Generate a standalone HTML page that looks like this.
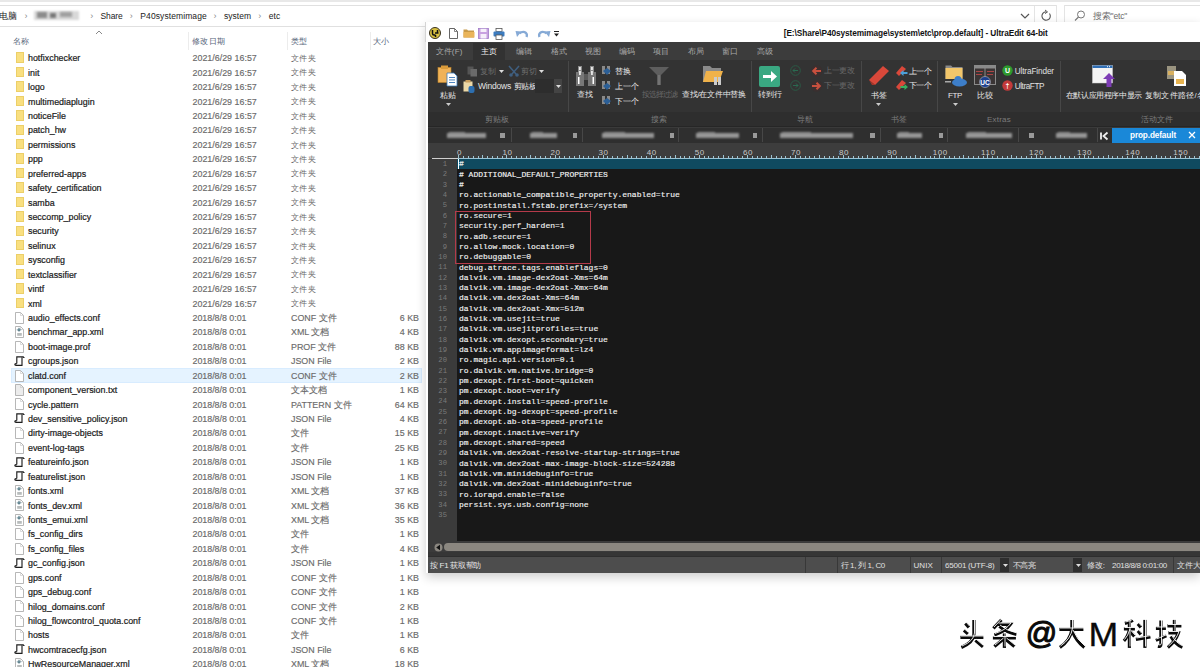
<!DOCTYPE html><html><head><meta charset="utf-8"><style>
*{margin:0;padding:0;box-sizing:border-box}
html,body{width:1200px;height:667px;overflow:hidden;background:#fff}
body{position:relative;font-family:"Liberation Sans",sans-serif;font-size:9px;color:#222}
.a{position:absolute;white-space:nowrap}
.r{position:absolute}
svg{position:absolute;overflow:visible}
</style></head><body>
<div class="r" style="left:0px;top:0px;width:1200px;height:2px;background:#e8e8e8;"></div>
<div class="r" style="left:0px;top:5px;width:1034px;height:1px;background:#e0e0e0;"></div>
<div class="r" style="left:0px;top:26px;width:1034px;height:1px;background:#e0e0e0;"></div>
<div class="r" style="left:1034px;top:5px;width:1px;height:22px;background:#e4e4e4;"></div>
<div class="r" style="left:1056px;top:5px;width:1px;height:22px;background:#e4e4e4;"></div>
<div class="r" style="left:1034px;top:5px;width:22px;height:1px;background:#e0e0e0;"></div>
<div class="r" style="left:1034px;top:26px;width:22px;height:1px;background:#e0e0e0;"></div>
<div class="r" style="left:1064px;top:5px;width:136px;height:1px;background:#e0e0e0;"></div>
<div class="r" style="left:1064px;top:26px;width:136px;height:1px;background:#e0e0e0;"></div>
<div class="r" style="left:1064px;top:5px;width:1px;height:22px;background:#e4e4e4;"></div>
<div class="a" style="left:-1.00px;top:10.60px;line-height:11.05px;font-size:8.5px;font-weight:normal;font-family:'Liberation Sans',sans-serif;color:#222;">电脑</div>
<div class="r" style="left:34px;top:11px;width:45px;height:9px;background:#d8d8d8;filter:blur(0.8px)"></div>
<div class="r" style="left:37px;top:12px;width:10px;height:6px;background:#8c8c8c;filter:blur(0.8px)"></div>
<div class="r" style="left:50px;top:13px;width:6px;height:5px;background:#777;filter:blur(0.8px)"></div>
<div class="r" style="left:60px;top:12px;width:12px;height:5px;background:#a0a0a0;filter:blur(0.8px)"></div>
<div class="a" style="left:24.50px;top:10.78px;line-height:11.7px;font-size:9px;font-weight:normal;font-family:'Liberation Sans',sans-serif;color:#8a8a8a;">›</div>
<div class="a" style="left:90.20px;top:10.78px;line-height:11.7px;font-size:9px;font-weight:normal;font-family:'Liberation Sans',sans-serif;color:#8a8a8a;">›</div>
<div class="a" style="left:129.80px;top:10.78px;line-height:11.7px;font-size:9px;font-weight:normal;font-family:'Liberation Sans',sans-serif;color:#8a8a8a;">›</div>
<div class="a" style="left:213.50px;top:10.78px;line-height:11.7px;font-size:9px;font-weight:normal;font-family:'Liberation Sans',sans-serif;color:#8a8a8a;">›</div>
<div class="a" style="left:258.20px;top:10.78px;line-height:11.7px;font-size:9px;font-weight:normal;font-family:'Liberation Sans',sans-serif;color:#8a8a8a;">›</div>
<div class="a" style="left:100.40px;top:10.60px;line-height:11.05px;font-size:8.5px;font-weight:normal;font-family:'Liberation Sans',sans-serif;letter-spacing:-0.077px;color:#222;">Share</div>
<div class="a" style="left:140.30px;top:10.60px;line-height:11.05px;font-size:8.5px;font-weight:normal;font-family:'Liberation Sans',sans-serif;letter-spacing:0.093px;color:#222;">P40systemimage</div>
<div class="a" style="left:224.00px;top:10.60px;line-height:11.05px;font-size:8.5px;font-weight:normal;font-family:'Liberation Sans',sans-serif;letter-spacing:0.013px;color:#222;">system</div>
<div class="a" style="left:268.70px;top:10.60px;line-height:11.05px;font-size:8.5px;font-weight:normal;font-family:'Liberation Sans',sans-serif;letter-spacing:0.052px;color:#222;">etc</div>
<svg style="left:1020px;top:13px" width="10" height="6"><path d="M1 1 L5 5 L9 1" fill="none" stroke="#555" stroke-width="1.2"/></svg>
<svg style="left:1040px;top:10px" width="12" height="12"><path d="M9.5 3.5 A4.2 4.2 0 1 1 6 1.8" fill="none" stroke="#555" stroke-width="1.1"/><path d="M5 0 L7.5 1.9 L5 3.6" fill="none" stroke="#555" stroke-width="1"/></svg>
<svg style="left:1074px;top:10px" width="12" height="12"><circle cx="7" cy="4.5" r="3.5" fill="none" stroke="#777" stroke-width="1"/><path d="M4.5 7 L1 10.5" stroke="#777" stroke-width="1.1"/></svg>
<div class="a" style="left:1093.00px;top:11.10px;line-height:11.05px;font-size:8.5px;font-weight:normal;font-family:'Liberation Sans',sans-serif;letter-spacing:-0.196px;color:#6d6d6d;">搜索"etc"</div>
<div class="a" style="left:13.00px;top:35.53px;line-height:10.79px;font-size:8.3px;font-weight:normal;font-family:'Liberation Sans',sans-serif;letter-spacing:0.250px;color:#56657a;">名称</div>
<div class="a" style="left:192.00px;top:35.53px;line-height:10.79px;font-size:8.3px;font-weight:normal;font-family:'Liberation Sans',sans-serif;letter-spacing:0.250px;color:#56657a;">修改日期</div>
<div class="a" style="left:291.00px;top:35.53px;line-height:10.79px;font-size:8.3px;font-weight:normal;font-family:'Liberation Sans',sans-serif;letter-spacing:0.250px;color:#56657a;">类型</div>
<div class="a" style="left:373.00px;top:35.53px;line-height:10.79px;font-size:8.3px;font-weight:normal;font-family:'Liberation Sans',sans-serif;letter-spacing:0.250px;color:#56657a;">大小</div>
<svg style="left:95px;top:30px" width="8" height="5"><path d="M1 4 L4 1 L7 4" fill="none" stroke="#888" stroke-width="1"/></svg>
<div class="r" style="left:188px;top:32px;width:1px;height:18px;background:#ececec;"></div>
<div class="r" style="left:287px;top:32px;width:1px;height:18px;background:#ececec;"></div>
<div class="r" style="left:370px;top:32px;width:1px;height:18px;background:#ececec;"></div>
<div class="r" style="left:15.5px;top:52.4px;width:8.5px;height:10.5px;background:#f9df80;border:0.6px solid #eccf68"></div>
<div class="a" style="left:28.00px;top:53.24px;line-height:11.57px;font-size:8.9px;font-weight:normal;font-family:'Liberation Sans',sans-serif;color:#1a1a1a;-webkit-text-stroke:0.2px #1a1a1a">hotfixchecker</div>
<div class="a" style="left:192.50px;top:53.24px;line-height:11.57px;font-size:8.9px;font-weight:normal;font-family:'Liberation Sans',sans-serif;letter-spacing:0.009px;color:#6a6a6a;-webkit-text-stroke:0.15px #6a6a6a">2021/6/29 16:57</div>
<div class="a" style="left:291.00px;top:53.99px;line-height:10.66px;font-size:8.2px;font-weight:normal;font-family:'Liberation Sans',sans-serif;letter-spacing:0.333px;color:#6a6a6a;">文件夹</div>
<div class="r" style="left:15.5px;top:66.83px;width:8.5px;height:10.5px;background:#f9df80;border:0.6px solid #eccf68"></div>
<div class="a" style="left:28.00px;top:67.67px;line-height:11.57px;font-size:8.9px;font-weight:normal;font-family:'Liberation Sans',sans-serif;color:#1a1a1a;-webkit-text-stroke:0.2px #1a1a1a">init</div>
<div class="a" style="left:192.50px;top:67.67px;line-height:11.57px;font-size:8.9px;font-weight:normal;font-family:'Liberation Sans',sans-serif;letter-spacing:0.009px;color:#6a6a6a;-webkit-text-stroke:0.15px #6a6a6a">2021/6/29 16:57</div>
<div class="a" style="left:291.00px;top:68.42px;line-height:10.66px;font-size:8.2px;font-weight:normal;font-family:'Liberation Sans',sans-serif;letter-spacing:0.333px;color:#6a6a6a;">文件夹</div>
<div class="r" style="left:15.5px;top:81.26px;width:8.5px;height:10.5px;background:#f9df80;border:0.6px solid #eccf68"></div>
<div class="a" style="left:28.00px;top:82.10px;line-height:11.57px;font-size:8.9px;font-weight:normal;font-family:'Liberation Sans',sans-serif;color:#1a1a1a;-webkit-text-stroke:0.2px #1a1a1a">logo</div>
<div class="a" style="left:192.50px;top:82.10px;line-height:11.57px;font-size:8.9px;font-weight:normal;font-family:'Liberation Sans',sans-serif;letter-spacing:0.009px;color:#6a6a6a;-webkit-text-stroke:0.15px #6a6a6a">2021/6/29 16:57</div>
<div class="a" style="left:291.00px;top:82.85px;line-height:10.66px;font-size:8.2px;font-weight:normal;font-family:'Liberation Sans',sans-serif;letter-spacing:0.333px;color:#6a6a6a;">文件夹</div>
<div class="r" style="left:15.5px;top:95.69px;width:8.5px;height:10.5px;background:#f9df80;border:0.6px solid #eccf68"></div>
<div class="a" style="left:28.00px;top:96.53px;line-height:11.57px;font-size:8.9px;font-weight:normal;font-family:'Liberation Sans',sans-serif;color:#1a1a1a;-webkit-text-stroke:0.2px #1a1a1a">multimediaplugin</div>
<div class="a" style="left:192.50px;top:96.53px;line-height:11.57px;font-size:8.9px;font-weight:normal;font-family:'Liberation Sans',sans-serif;letter-spacing:0.009px;color:#6a6a6a;-webkit-text-stroke:0.15px #6a6a6a">2021/6/29 16:57</div>
<div class="a" style="left:291.00px;top:97.28px;line-height:10.66px;font-size:8.2px;font-weight:normal;font-family:'Liberation Sans',sans-serif;letter-spacing:0.333px;color:#6a6a6a;">文件夹</div>
<div class="r" style="left:15.5px;top:110.12px;width:8.5px;height:10.5px;background:#f9df80;border:0.6px solid #eccf68"></div>
<div class="a" style="left:28.00px;top:110.96px;line-height:11.57px;font-size:8.9px;font-weight:normal;font-family:'Liberation Sans',sans-serif;color:#1a1a1a;-webkit-text-stroke:0.2px #1a1a1a">noticeFile</div>
<div class="a" style="left:192.50px;top:110.96px;line-height:11.57px;font-size:8.9px;font-weight:normal;font-family:'Liberation Sans',sans-serif;letter-spacing:0.009px;color:#6a6a6a;-webkit-text-stroke:0.15px #6a6a6a">2021/6/29 16:57</div>
<div class="a" style="left:291.00px;top:111.71px;line-height:10.66px;font-size:8.2px;font-weight:normal;font-family:'Liberation Sans',sans-serif;letter-spacing:0.333px;color:#6a6a6a;">文件夹</div>
<div class="r" style="left:15.5px;top:124.55px;width:8.5px;height:10.5px;background:#f9df80;border:0.6px solid #eccf68"></div>
<div class="a" style="left:28.00px;top:125.39px;line-height:11.57px;font-size:8.9px;font-weight:normal;font-family:'Liberation Sans',sans-serif;color:#1a1a1a;-webkit-text-stroke:0.2px #1a1a1a">patch_hw</div>
<div class="a" style="left:192.50px;top:125.39px;line-height:11.57px;font-size:8.9px;font-weight:normal;font-family:'Liberation Sans',sans-serif;letter-spacing:0.009px;color:#6a6a6a;-webkit-text-stroke:0.15px #6a6a6a">2021/6/29 16:57</div>
<div class="a" style="left:291.00px;top:126.14px;line-height:10.66px;font-size:8.2px;font-weight:normal;font-family:'Liberation Sans',sans-serif;letter-spacing:0.333px;color:#6a6a6a;">文件夹</div>
<div class="r" style="left:15.5px;top:138.98px;width:8.5px;height:10.5px;background:#f9df80;border:0.6px solid #eccf68"></div>
<div class="a" style="left:28.00px;top:139.82px;line-height:11.57px;font-size:8.9px;font-weight:normal;font-family:'Liberation Sans',sans-serif;color:#1a1a1a;-webkit-text-stroke:0.2px #1a1a1a">permissions</div>
<div class="a" style="left:192.50px;top:139.82px;line-height:11.57px;font-size:8.9px;font-weight:normal;font-family:'Liberation Sans',sans-serif;letter-spacing:0.009px;color:#6a6a6a;-webkit-text-stroke:0.15px #6a6a6a">2021/6/29 16:57</div>
<div class="a" style="left:291.00px;top:140.57px;line-height:10.66px;font-size:8.2px;font-weight:normal;font-family:'Liberation Sans',sans-serif;letter-spacing:0.333px;color:#6a6a6a;">文件夹</div>
<div class="r" style="left:15.5px;top:153.41px;width:8.5px;height:10.5px;background:#f9df80;border:0.6px solid #eccf68"></div>
<div class="a" style="left:28.00px;top:154.25px;line-height:11.57px;font-size:8.9px;font-weight:normal;font-family:'Liberation Sans',sans-serif;color:#1a1a1a;-webkit-text-stroke:0.2px #1a1a1a">ppp</div>
<div class="a" style="left:192.50px;top:154.25px;line-height:11.57px;font-size:8.9px;font-weight:normal;font-family:'Liberation Sans',sans-serif;letter-spacing:0.009px;color:#6a6a6a;-webkit-text-stroke:0.15px #6a6a6a">2021/6/29 16:57</div>
<div class="a" style="left:291.00px;top:155.00px;line-height:10.66px;font-size:8.2px;font-weight:normal;font-family:'Liberation Sans',sans-serif;letter-spacing:0.333px;color:#6a6a6a;">文件夹</div>
<div class="r" style="left:15.5px;top:167.84px;width:8.5px;height:10.5px;background:#f9df80;border:0.6px solid #eccf68"></div>
<div class="a" style="left:28.00px;top:168.68px;line-height:11.57px;font-size:8.9px;font-weight:normal;font-family:'Liberation Sans',sans-serif;color:#1a1a1a;-webkit-text-stroke:0.2px #1a1a1a">preferred-apps</div>
<div class="a" style="left:192.50px;top:168.68px;line-height:11.57px;font-size:8.9px;font-weight:normal;font-family:'Liberation Sans',sans-serif;letter-spacing:0.009px;color:#6a6a6a;-webkit-text-stroke:0.15px #6a6a6a">2021/6/29 16:57</div>
<div class="a" style="left:291.00px;top:169.43px;line-height:10.66px;font-size:8.2px;font-weight:normal;font-family:'Liberation Sans',sans-serif;letter-spacing:0.333px;color:#6a6a6a;">文件夹</div>
<div class="r" style="left:15.5px;top:182.27px;width:8.5px;height:10.5px;background:#f9df80;border:0.6px solid #eccf68"></div>
<div class="a" style="left:28.00px;top:183.11px;line-height:11.57px;font-size:8.9px;font-weight:normal;font-family:'Liberation Sans',sans-serif;color:#1a1a1a;-webkit-text-stroke:0.2px #1a1a1a">safety_certification</div>
<div class="a" style="left:192.50px;top:183.11px;line-height:11.57px;font-size:8.9px;font-weight:normal;font-family:'Liberation Sans',sans-serif;letter-spacing:0.009px;color:#6a6a6a;-webkit-text-stroke:0.15px #6a6a6a">2021/6/29 16:57</div>
<div class="a" style="left:291.00px;top:183.86px;line-height:10.66px;font-size:8.2px;font-weight:normal;font-family:'Liberation Sans',sans-serif;letter-spacing:0.333px;color:#6a6a6a;">文件夹</div>
<div class="r" style="left:15.5px;top:196.7px;width:8.5px;height:10.5px;background:#f9df80;border:0.6px solid #eccf68"></div>
<div class="a" style="left:28.00px;top:197.54px;line-height:11.57px;font-size:8.9px;font-weight:normal;font-family:'Liberation Sans',sans-serif;color:#1a1a1a;-webkit-text-stroke:0.2px #1a1a1a">samba</div>
<div class="a" style="left:192.50px;top:197.54px;line-height:11.57px;font-size:8.9px;font-weight:normal;font-family:'Liberation Sans',sans-serif;letter-spacing:0.009px;color:#6a6a6a;-webkit-text-stroke:0.15px #6a6a6a">2021/6/29 16:57</div>
<div class="a" style="left:291.00px;top:198.29px;line-height:10.66px;font-size:8.2px;font-weight:normal;font-family:'Liberation Sans',sans-serif;letter-spacing:0.333px;color:#6a6a6a;">文件夹</div>
<div class="r" style="left:15.5px;top:211.13px;width:8.5px;height:10.5px;background:#f9df80;border:0.6px solid #eccf68"></div>
<div class="a" style="left:28.00px;top:211.97px;line-height:11.57px;font-size:8.9px;font-weight:normal;font-family:'Liberation Sans',sans-serif;color:#1a1a1a;-webkit-text-stroke:0.2px #1a1a1a">seccomp_policy</div>
<div class="a" style="left:192.50px;top:211.97px;line-height:11.57px;font-size:8.9px;font-weight:normal;font-family:'Liberation Sans',sans-serif;letter-spacing:0.009px;color:#6a6a6a;-webkit-text-stroke:0.15px #6a6a6a">2021/6/29 16:57</div>
<div class="a" style="left:291.00px;top:212.72px;line-height:10.66px;font-size:8.2px;font-weight:normal;font-family:'Liberation Sans',sans-serif;letter-spacing:0.333px;color:#6a6a6a;">文件夹</div>
<div class="r" style="left:15.5px;top:225.56px;width:8.5px;height:10.5px;background:#f9df80;border:0.6px solid #eccf68"></div>
<div class="a" style="left:28.00px;top:226.40px;line-height:11.57px;font-size:8.9px;font-weight:normal;font-family:'Liberation Sans',sans-serif;color:#1a1a1a;-webkit-text-stroke:0.2px #1a1a1a">security</div>
<div class="a" style="left:192.50px;top:226.40px;line-height:11.57px;font-size:8.9px;font-weight:normal;font-family:'Liberation Sans',sans-serif;letter-spacing:0.009px;color:#6a6a6a;-webkit-text-stroke:0.15px #6a6a6a">2021/6/29 16:57</div>
<div class="a" style="left:291.00px;top:227.15px;line-height:10.66px;font-size:8.2px;font-weight:normal;font-family:'Liberation Sans',sans-serif;letter-spacing:0.333px;color:#6a6a6a;">文件夹</div>
<div class="r" style="left:15.5px;top:239.99px;width:8.5px;height:10.5px;background:#f9df80;border:0.6px solid #eccf68"></div>
<div class="a" style="left:28.00px;top:240.83px;line-height:11.57px;font-size:8.9px;font-weight:normal;font-family:'Liberation Sans',sans-serif;color:#1a1a1a;-webkit-text-stroke:0.2px #1a1a1a">selinux</div>
<div class="a" style="left:192.50px;top:240.83px;line-height:11.57px;font-size:8.9px;font-weight:normal;font-family:'Liberation Sans',sans-serif;letter-spacing:0.009px;color:#6a6a6a;-webkit-text-stroke:0.15px #6a6a6a">2021/6/29 16:57</div>
<div class="a" style="left:291.00px;top:241.58px;line-height:10.66px;font-size:8.2px;font-weight:normal;font-family:'Liberation Sans',sans-serif;letter-spacing:0.333px;color:#6a6a6a;">文件夹</div>
<div class="r" style="left:15.5px;top:254.42px;width:8.5px;height:10.5px;background:#f9df80;border:0.6px solid #eccf68"></div>
<div class="a" style="left:28.00px;top:255.26px;line-height:11.57px;font-size:8.9px;font-weight:normal;font-family:'Liberation Sans',sans-serif;color:#1a1a1a;-webkit-text-stroke:0.2px #1a1a1a">sysconfig</div>
<div class="a" style="left:192.50px;top:255.26px;line-height:11.57px;font-size:8.9px;font-weight:normal;font-family:'Liberation Sans',sans-serif;letter-spacing:0.009px;color:#6a6a6a;-webkit-text-stroke:0.15px #6a6a6a">2021/6/29 16:57</div>
<div class="a" style="left:291.00px;top:256.01px;line-height:10.66px;font-size:8.2px;font-weight:normal;font-family:'Liberation Sans',sans-serif;letter-spacing:0.333px;color:#6a6a6a;">文件夹</div>
<div class="r" style="left:15.5px;top:268.85px;width:8.5px;height:10.5px;background:#f9df80;border:0.6px solid #eccf68"></div>
<div class="a" style="left:28.00px;top:269.69px;line-height:11.57px;font-size:8.9px;font-weight:normal;font-family:'Liberation Sans',sans-serif;color:#1a1a1a;-webkit-text-stroke:0.2px #1a1a1a">textclassifier</div>
<div class="a" style="left:192.50px;top:269.69px;line-height:11.57px;font-size:8.9px;font-weight:normal;font-family:'Liberation Sans',sans-serif;letter-spacing:0.009px;color:#6a6a6a;-webkit-text-stroke:0.15px #6a6a6a">2021/6/29 16:57</div>
<div class="a" style="left:291.00px;top:270.44px;line-height:10.66px;font-size:8.2px;font-weight:normal;font-family:'Liberation Sans',sans-serif;letter-spacing:0.333px;color:#6a6a6a;">文件夹</div>
<div class="r" style="left:15.5px;top:283.28px;width:8.5px;height:10.5px;background:#f9df80;border:0.6px solid #eccf68"></div>
<div class="a" style="left:28.00px;top:284.12px;line-height:11.57px;font-size:8.9px;font-weight:normal;font-family:'Liberation Sans',sans-serif;color:#1a1a1a;-webkit-text-stroke:0.2px #1a1a1a">vintf</div>
<div class="a" style="left:192.50px;top:284.12px;line-height:11.57px;font-size:8.9px;font-weight:normal;font-family:'Liberation Sans',sans-serif;letter-spacing:0.009px;color:#6a6a6a;-webkit-text-stroke:0.15px #6a6a6a">2021/6/29 16:57</div>
<div class="a" style="left:291.00px;top:284.87px;line-height:10.66px;font-size:8.2px;font-weight:normal;font-family:'Liberation Sans',sans-serif;letter-spacing:0.333px;color:#6a6a6a;">文件夹</div>
<div class="r" style="left:15.5px;top:297.71px;width:8.5px;height:10.5px;background:#f9df80;border:0.6px solid #eccf68"></div>
<div class="a" style="left:28.00px;top:298.55px;line-height:11.57px;font-size:8.9px;font-weight:normal;font-family:'Liberation Sans',sans-serif;color:#1a1a1a;-webkit-text-stroke:0.2px #1a1a1a">xml</div>
<div class="a" style="left:192.50px;top:298.55px;line-height:11.57px;font-size:8.9px;font-weight:normal;font-family:'Liberation Sans',sans-serif;letter-spacing:0.009px;color:#6a6a6a;-webkit-text-stroke:0.15px #6a6a6a">2021/6/29 16:57</div>
<div class="a" style="left:291.00px;top:299.30px;line-height:10.66px;font-size:8.2px;font-weight:normal;font-family:'Liberation Sans',sans-serif;letter-spacing:0.333px;color:#6a6a6a;">文件夹</div>
<svg style="left:15px;top:311.84px" width="9" height="12"><path d="M0.5 0.5 H5.5 L8.5 3.5 V11.5 H0.5 Z" fill="#fff" stroke="#a4a4a4" stroke-width="0.8"/><path d="M5.5 0.5 V3.5 H8.5" fill="none" stroke="#c4c4c4" stroke-width="0.6"/></svg>
<div class="a" style="left:28.00px;top:312.98px;line-height:11.57px;font-size:8.9px;font-weight:normal;font-family:'Liberation Sans',sans-serif;color:#1a1a1a;-webkit-text-stroke:0.2px #1a1a1a">audio_effects.conf</div>
<div class="a" style="left:192.50px;top:312.98px;line-height:11.57px;font-size:8.9px;font-weight:normal;font-family:'Liberation Sans',sans-serif;letter-spacing:-0.023px;color:#6a6a6a;-webkit-text-stroke:0.15px #6a6a6a">2018/8/8 0:01</div>
<div class="a" style="left:291.00px;top:312.98px;line-height:11.57px;font-size:8.9px;font-weight:normal;font-family:'Liberation Sans',sans-serif;color:#6a6a6a;-webkit-text-stroke:0.15px #6a6a6a">CONF 文件</div>
<div class="a" style="left:399.75px;top:312.98px;line-height:11.57px;font-size:8.9px;font-weight:normal;font-family:'Liberation Sans',sans-serif;color:#6a6a6a;-webkit-text-stroke:0.15px #6a6a6a">6 KB</div>
<svg style="left:15px;top:326.27px" width="9" height="12"><path d="M0.5 0.5 H5.5 L8.5 3.5 V11.5 H0.5 Z" fill="#fff" stroke="#a4a4a4" stroke-width="0.8"/><path d="M5.5 0.5 V3.5 H8.5" fill="none" stroke="#c4c4c4" stroke-width="0.6"/><circle cx="4" cy="3.8" r="1.5" fill="#4a6a70"/><path d="M1.5 3.8 H6.5 M4 1.5 V6" stroke="#8ab" stroke-width="0.6"/><rect x="2.2" y="7" width="4.6" height="2.8" fill="#b8bcbc"/></svg>
<div class="a" style="left:28.00px;top:327.41px;line-height:11.57px;font-size:8.9px;font-weight:normal;font-family:'Liberation Sans',sans-serif;color:#1a1a1a;-webkit-text-stroke:0.2px #1a1a1a">benchmar_app.xml</div>
<div class="a" style="left:192.50px;top:327.41px;line-height:11.57px;font-size:8.9px;font-weight:normal;font-family:'Liberation Sans',sans-serif;letter-spacing:-0.023px;color:#6a6a6a;-webkit-text-stroke:0.15px #6a6a6a">2018/8/8 0:01</div>
<div class="a" style="left:291.00px;top:327.41px;line-height:11.57px;font-size:8.9px;font-weight:normal;font-family:'Liberation Sans',sans-serif;color:#6a6a6a;-webkit-text-stroke:0.15px #6a6a6a">XML 文档</div>
<div class="a" style="left:399.75px;top:327.41px;line-height:11.57px;font-size:8.9px;font-weight:normal;font-family:'Liberation Sans',sans-serif;color:#6a6a6a;-webkit-text-stroke:0.15px #6a6a6a">4 KB</div>
<svg style="left:15px;top:340.70px" width="9" height="12"><path d="M0.5 0.5 H5.5 L8.5 3.5 V11.5 H0.5 Z" fill="#fff" stroke="#a4a4a4" stroke-width="0.8"/><path d="M5.5 0.5 V3.5 H8.5" fill="none" stroke="#c4c4c4" stroke-width="0.6"/></svg>
<div class="a" style="left:28.00px;top:341.84px;line-height:11.57px;font-size:8.9px;font-weight:normal;font-family:'Liberation Sans',sans-serif;color:#1a1a1a;-webkit-text-stroke:0.2px #1a1a1a">boot-image.prof</div>
<div class="a" style="left:192.50px;top:341.84px;line-height:11.57px;font-size:8.9px;font-weight:normal;font-family:'Liberation Sans',sans-serif;letter-spacing:-0.023px;color:#6a6a6a;-webkit-text-stroke:0.15px #6a6a6a">2018/8/8 0:01</div>
<div class="a" style="left:291.00px;top:341.84px;line-height:11.57px;font-size:8.9px;font-weight:normal;font-family:'Liberation Sans',sans-serif;color:#6a6a6a;-webkit-text-stroke:0.15px #6a6a6a">PROF 文件</div>
<div class="a" style="left:394.81px;top:341.84px;line-height:11.57px;font-size:8.9px;font-weight:normal;font-family:'Liberation Sans',sans-serif;color:#6a6a6a;-webkit-text-stroke:0.15px #6a6a6a">88 KB</div>
<svg style="left:14px;top:355.63px" width="11" height="11"><path d="M2.8 7.6 V0.9 H9.8" fill="none" stroke="#1e1e1e" stroke-width="1.15"/><path d="M8 1.2 V9.3 H2 Q0.8 9.3 0.8 8.4 Q0.8 7.6 2.8 7.6" fill="none" stroke="#1e1e1e" stroke-width="1.15"/><path d="M9.8 0.9 L9.8 2" stroke="#1e1e1e" stroke-width="1.4"/></svg>
<div class="a" style="left:28.00px;top:356.27px;line-height:11.57px;font-size:8.9px;font-weight:normal;font-family:'Liberation Sans',sans-serif;color:#1a1a1a;-webkit-text-stroke:0.2px #1a1a1a">cgroups.json</div>
<div class="a" style="left:192.50px;top:356.27px;line-height:11.57px;font-size:8.9px;font-weight:normal;font-family:'Liberation Sans',sans-serif;letter-spacing:-0.023px;color:#6a6a6a;-webkit-text-stroke:0.15px #6a6a6a">2018/8/8 0:01</div>
<div class="a" style="left:291.00px;top:356.27px;line-height:11.57px;font-size:8.9px;font-weight:normal;font-family:'Liberation Sans',sans-serif;color:#6a6a6a;-webkit-text-stroke:0.15px #6a6a6a">JSON File</div>
<div class="a" style="left:399.75px;top:356.27px;line-height:11.57px;font-size:8.9px;font-weight:normal;font-family:'Liberation Sans',sans-serif;color:#6a6a6a;-webkit-text-stroke:0.15px #6a6a6a">2 KB</div>
<div class="r" style="left:11px;top:368.15999999999997px;width:411px;height:14.6px;background:#e5f3ff;border:1px solid #d8ecff"></div>
<svg style="left:15px;top:369.56px" width="9" height="12"><path d="M0.5 0.5 H5.5 L8.5 3.5 V11.5 H0.5 Z" fill="#fff" stroke="#a4a4a4" stroke-width="0.8"/><path d="M5.5 0.5 V3.5 H8.5" fill="none" stroke="#c4c4c4" stroke-width="0.6"/></svg>
<div class="a" style="left:28.00px;top:370.70px;line-height:11.57px;font-size:8.9px;font-weight:normal;font-family:'Liberation Sans',sans-serif;color:#1a1a1a;-webkit-text-stroke:0.2px #1a1a1a">clatd.conf</div>
<div class="a" style="left:192.50px;top:370.70px;line-height:11.57px;font-size:8.9px;font-weight:normal;font-family:'Liberation Sans',sans-serif;letter-spacing:-0.023px;color:#6a6a6a;-webkit-text-stroke:0.15px #6a6a6a">2018/8/8 0:01</div>
<div class="a" style="left:291.00px;top:370.70px;line-height:11.57px;font-size:8.9px;font-weight:normal;font-family:'Liberation Sans',sans-serif;color:#6a6a6a;-webkit-text-stroke:0.15px #6a6a6a">CONF 文件</div>
<div class="a" style="left:399.75px;top:370.70px;line-height:11.57px;font-size:8.9px;font-weight:normal;font-family:'Liberation Sans',sans-serif;color:#6a6a6a;-webkit-text-stroke:0.15px #6a6a6a">2 KB</div>
<svg style="left:15px;top:383.99px" width="9" height="12"><path d="M0.5 0.5 H5.5 L8.5 3.5 V11.5 H0.5 Z" fill="#ececec" stroke="#a4a4a4" stroke-width="0.8"/><path d="M5.5 0.5 V3.5 H8.5" fill="none" stroke="#c4c4c4" stroke-width="0.6"/></svg>
<div class="a" style="left:28.00px;top:385.13px;line-height:11.57px;font-size:8.9px;font-weight:normal;font-family:'Liberation Sans',sans-serif;color:#1a1a1a;-webkit-text-stroke:0.2px #1a1a1a">component_version.txt</div>
<div class="a" style="left:192.50px;top:385.13px;line-height:11.57px;font-size:8.9px;font-weight:normal;font-family:'Liberation Sans',sans-serif;letter-spacing:-0.023px;color:#6a6a6a;-webkit-text-stroke:0.15px #6a6a6a">2018/8/8 0:01</div>
<div class="a" style="left:291.00px;top:385.13px;line-height:11.57px;font-size:8.9px;font-weight:normal;font-family:'Liberation Sans',sans-serif;color:#6a6a6a;-webkit-text-stroke:0.15px #6a6a6a">文本文档</div>
<div class="a" style="left:399.75px;top:385.13px;line-height:11.57px;font-size:8.9px;font-weight:normal;font-family:'Liberation Sans',sans-serif;color:#6a6a6a;-webkit-text-stroke:0.15px #6a6a6a">1 KB</div>
<svg style="left:15px;top:398.42px" width="9" height="12"><path d="M0.5 0.5 H5.5 L8.5 3.5 V11.5 H0.5 Z" fill="#fff" stroke="#a4a4a4" stroke-width="0.8"/><path d="M5.5 0.5 V3.5 H8.5" fill="none" stroke="#c4c4c4" stroke-width="0.6"/></svg>
<div class="a" style="left:28.00px;top:399.56px;line-height:11.57px;font-size:8.9px;font-weight:normal;font-family:'Liberation Sans',sans-serif;color:#1a1a1a;-webkit-text-stroke:0.2px #1a1a1a">cycle.pattern</div>
<div class="a" style="left:192.50px;top:399.56px;line-height:11.57px;font-size:8.9px;font-weight:normal;font-family:'Liberation Sans',sans-serif;letter-spacing:-0.023px;color:#6a6a6a;-webkit-text-stroke:0.15px #6a6a6a">2018/8/8 0:01</div>
<div class="a" style="left:291.00px;top:399.56px;line-height:11.57px;font-size:8.9px;font-weight:normal;font-family:'Liberation Sans',sans-serif;color:#6a6a6a;-webkit-text-stroke:0.15px #6a6a6a">PATTERN 文件</div>
<div class="a" style="left:394.81px;top:399.56px;line-height:11.57px;font-size:8.9px;font-weight:normal;font-family:'Liberation Sans',sans-serif;color:#6a6a6a;-webkit-text-stroke:0.15px #6a6a6a">64 KB</div>
<svg style="left:14px;top:413.35px" width="11" height="11"><path d="M2.8 7.6 V0.9 H9.8" fill="none" stroke="#1e1e1e" stroke-width="1.15"/><path d="M8 1.2 V9.3 H2 Q0.8 9.3 0.8 8.4 Q0.8 7.6 2.8 7.6" fill="none" stroke="#1e1e1e" stroke-width="1.15"/><path d="M9.8 0.9 L9.8 2" stroke="#1e1e1e" stroke-width="1.4"/></svg>
<div class="a" style="left:28.00px;top:413.99px;line-height:11.57px;font-size:8.9px;font-weight:normal;font-family:'Liberation Sans',sans-serif;color:#1a1a1a;-webkit-text-stroke:0.2px #1a1a1a">dev_sensitive_policy.json</div>
<div class="a" style="left:192.50px;top:413.99px;line-height:11.57px;font-size:8.9px;font-weight:normal;font-family:'Liberation Sans',sans-serif;letter-spacing:-0.023px;color:#6a6a6a;-webkit-text-stroke:0.15px #6a6a6a">2018/8/8 0:01</div>
<div class="a" style="left:291.00px;top:413.99px;line-height:11.57px;font-size:8.9px;font-weight:normal;font-family:'Liberation Sans',sans-serif;color:#6a6a6a;-webkit-text-stroke:0.15px #6a6a6a">JSON File</div>
<div class="a" style="left:399.75px;top:413.99px;line-height:11.57px;font-size:8.9px;font-weight:normal;font-family:'Liberation Sans',sans-serif;color:#6a6a6a;-webkit-text-stroke:0.15px #6a6a6a">4 KB</div>
<svg style="left:15px;top:427.28px" width="9" height="12"><path d="M0.5 0.5 H5.5 L8.5 3.5 V11.5 H0.5 Z" fill="#fff" stroke="#a4a4a4" stroke-width="0.8"/><path d="M5.5 0.5 V3.5 H8.5" fill="none" stroke="#c4c4c4" stroke-width="0.6"/></svg>
<div class="a" style="left:28.00px;top:428.42px;line-height:11.57px;font-size:8.9px;font-weight:normal;font-family:'Liberation Sans',sans-serif;color:#1a1a1a;-webkit-text-stroke:0.2px #1a1a1a">dirty-image-objects</div>
<div class="a" style="left:192.50px;top:428.42px;line-height:11.57px;font-size:8.9px;font-weight:normal;font-family:'Liberation Sans',sans-serif;letter-spacing:-0.023px;color:#6a6a6a;-webkit-text-stroke:0.15px #6a6a6a">2018/8/8 0:01</div>
<div class="a" style="left:291.00px;top:428.42px;line-height:11.57px;font-size:8.9px;font-weight:normal;font-family:'Liberation Sans',sans-serif;color:#6a6a6a;-webkit-text-stroke:0.15px #6a6a6a">文件</div>
<div class="a" style="left:394.81px;top:428.42px;line-height:11.57px;font-size:8.9px;font-weight:normal;font-family:'Liberation Sans',sans-serif;color:#6a6a6a;-webkit-text-stroke:0.15px #6a6a6a">15 KB</div>
<svg style="left:15px;top:441.71px" width="9" height="12"><path d="M0.5 0.5 H5.5 L8.5 3.5 V11.5 H0.5 Z" fill="#fff" stroke="#a4a4a4" stroke-width="0.8"/><path d="M5.5 0.5 V3.5 H8.5" fill="none" stroke="#c4c4c4" stroke-width="0.6"/></svg>
<div class="a" style="left:28.00px;top:442.85px;line-height:11.57px;font-size:8.9px;font-weight:normal;font-family:'Liberation Sans',sans-serif;color:#1a1a1a;-webkit-text-stroke:0.2px #1a1a1a">event-log-tags</div>
<div class="a" style="left:192.50px;top:442.85px;line-height:11.57px;font-size:8.9px;font-weight:normal;font-family:'Liberation Sans',sans-serif;letter-spacing:-0.023px;color:#6a6a6a;-webkit-text-stroke:0.15px #6a6a6a">2018/8/8 0:01</div>
<div class="a" style="left:291.00px;top:442.85px;line-height:11.57px;font-size:8.9px;font-weight:normal;font-family:'Liberation Sans',sans-serif;color:#6a6a6a;-webkit-text-stroke:0.15px #6a6a6a">文件</div>
<div class="a" style="left:394.81px;top:442.85px;line-height:11.57px;font-size:8.9px;font-weight:normal;font-family:'Liberation Sans',sans-serif;color:#6a6a6a;-webkit-text-stroke:0.15px #6a6a6a">25 KB</div>
<svg style="left:14px;top:456.64px" width="11" height="11"><path d="M2.8 7.6 V0.9 H9.8" fill="none" stroke="#1e1e1e" stroke-width="1.15"/><path d="M8 1.2 V9.3 H2 Q0.8 9.3 0.8 8.4 Q0.8 7.6 2.8 7.6" fill="none" stroke="#1e1e1e" stroke-width="1.15"/><path d="M9.8 0.9 L9.8 2" stroke="#1e1e1e" stroke-width="1.4"/></svg>
<div class="a" style="left:28.00px;top:457.28px;line-height:11.57px;font-size:8.9px;font-weight:normal;font-family:'Liberation Sans',sans-serif;color:#1a1a1a;-webkit-text-stroke:0.2px #1a1a1a">featureinfo.json</div>
<div class="a" style="left:192.50px;top:457.28px;line-height:11.57px;font-size:8.9px;font-weight:normal;font-family:'Liberation Sans',sans-serif;letter-spacing:-0.023px;color:#6a6a6a;-webkit-text-stroke:0.15px #6a6a6a">2018/8/8 0:01</div>
<div class="a" style="left:291.00px;top:457.28px;line-height:11.57px;font-size:8.9px;font-weight:normal;font-family:'Liberation Sans',sans-serif;color:#6a6a6a;-webkit-text-stroke:0.15px #6a6a6a">JSON File</div>
<div class="a" style="left:399.75px;top:457.28px;line-height:11.57px;font-size:8.9px;font-weight:normal;font-family:'Liberation Sans',sans-serif;color:#6a6a6a;-webkit-text-stroke:0.15px #6a6a6a">1 KB</div>
<svg style="left:14px;top:471.07px" width="11" height="11"><path d="M2.8 7.6 V0.9 H9.8" fill="none" stroke="#1e1e1e" stroke-width="1.15"/><path d="M8 1.2 V9.3 H2 Q0.8 9.3 0.8 8.4 Q0.8 7.6 2.8 7.6" fill="none" stroke="#1e1e1e" stroke-width="1.15"/><path d="M9.8 0.9 L9.8 2" stroke="#1e1e1e" stroke-width="1.4"/></svg>
<div class="a" style="left:28.00px;top:471.71px;line-height:11.57px;font-size:8.9px;font-weight:normal;font-family:'Liberation Sans',sans-serif;color:#1a1a1a;-webkit-text-stroke:0.2px #1a1a1a">featurelist.json</div>
<div class="a" style="left:192.50px;top:471.71px;line-height:11.57px;font-size:8.9px;font-weight:normal;font-family:'Liberation Sans',sans-serif;letter-spacing:-0.023px;color:#6a6a6a;-webkit-text-stroke:0.15px #6a6a6a">2018/8/8 0:01</div>
<div class="a" style="left:291.00px;top:471.71px;line-height:11.57px;font-size:8.9px;font-weight:normal;font-family:'Liberation Sans',sans-serif;color:#6a6a6a;-webkit-text-stroke:0.15px #6a6a6a">JSON File</div>
<div class="a" style="left:399.75px;top:471.71px;line-height:11.57px;font-size:8.9px;font-weight:normal;font-family:'Liberation Sans',sans-serif;color:#6a6a6a;-webkit-text-stroke:0.15px #6a6a6a">1 KB</div>
<svg style="left:15px;top:485.00px" width="9" height="12"><path d="M0.5 0.5 H5.5 L8.5 3.5 V11.5 H0.5 Z" fill="#fff" stroke="#a4a4a4" stroke-width="0.8"/><path d="M5.5 0.5 V3.5 H8.5" fill="none" stroke="#c4c4c4" stroke-width="0.6"/><circle cx="4" cy="3.8" r="1.5" fill="#4a6a70"/><path d="M1.5 3.8 H6.5 M4 1.5 V6" stroke="#8ab" stroke-width="0.6"/><rect x="2.2" y="7" width="4.6" height="2.8" fill="#b8bcbc"/></svg>
<div class="a" style="left:28.00px;top:486.14px;line-height:11.57px;font-size:8.9px;font-weight:normal;font-family:'Liberation Sans',sans-serif;color:#1a1a1a;-webkit-text-stroke:0.2px #1a1a1a">fonts.xml</div>
<div class="a" style="left:192.50px;top:486.14px;line-height:11.57px;font-size:8.9px;font-weight:normal;font-family:'Liberation Sans',sans-serif;letter-spacing:-0.023px;color:#6a6a6a;-webkit-text-stroke:0.15px #6a6a6a">2018/8/8 0:01</div>
<div class="a" style="left:291.00px;top:486.14px;line-height:11.57px;font-size:8.9px;font-weight:normal;font-family:'Liberation Sans',sans-serif;color:#6a6a6a;-webkit-text-stroke:0.15px #6a6a6a">XML 文档</div>
<div class="a" style="left:394.81px;top:486.14px;line-height:11.57px;font-size:8.9px;font-weight:normal;font-family:'Liberation Sans',sans-serif;color:#6a6a6a;-webkit-text-stroke:0.15px #6a6a6a">37 KB</div>
<svg style="left:15px;top:499.43px" width="9" height="12"><path d="M0.5 0.5 H5.5 L8.5 3.5 V11.5 H0.5 Z" fill="#fff" stroke="#a4a4a4" stroke-width="0.8"/><path d="M5.5 0.5 V3.5 H8.5" fill="none" stroke="#c4c4c4" stroke-width="0.6"/><circle cx="4" cy="3.8" r="1.5" fill="#4a6a70"/><path d="M1.5 3.8 H6.5 M4 1.5 V6" stroke="#8ab" stroke-width="0.6"/><rect x="2.2" y="7" width="4.6" height="2.8" fill="#b8bcbc"/></svg>
<div class="a" style="left:28.00px;top:500.57px;line-height:11.57px;font-size:8.9px;font-weight:normal;font-family:'Liberation Sans',sans-serif;color:#1a1a1a;-webkit-text-stroke:0.2px #1a1a1a">fonts_dev.xml</div>
<div class="a" style="left:192.50px;top:500.57px;line-height:11.57px;font-size:8.9px;font-weight:normal;font-family:'Liberation Sans',sans-serif;letter-spacing:-0.023px;color:#6a6a6a;-webkit-text-stroke:0.15px #6a6a6a">2018/8/8 0:01</div>
<div class="a" style="left:291.00px;top:500.57px;line-height:11.57px;font-size:8.9px;font-weight:normal;font-family:'Liberation Sans',sans-serif;color:#6a6a6a;-webkit-text-stroke:0.15px #6a6a6a">XML 文档</div>
<div class="a" style="left:394.81px;top:500.57px;line-height:11.57px;font-size:8.9px;font-weight:normal;font-family:'Liberation Sans',sans-serif;color:#6a6a6a;-webkit-text-stroke:0.15px #6a6a6a">36 KB</div>
<svg style="left:15px;top:513.86px" width="9" height="12"><path d="M0.5 0.5 H5.5 L8.5 3.5 V11.5 H0.5 Z" fill="#fff" stroke="#a4a4a4" stroke-width="0.8"/><path d="M5.5 0.5 V3.5 H8.5" fill="none" stroke="#c4c4c4" stroke-width="0.6"/><circle cx="4" cy="3.8" r="1.5" fill="#4a6a70"/><path d="M1.5 3.8 H6.5 M4 1.5 V6" stroke="#8ab" stroke-width="0.6"/><rect x="2.2" y="7" width="4.6" height="2.8" fill="#b8bcbc"/></svg>
<div class="a" style="left:28.00px;top:515.00px;line-height:11.57px;font-size:8.9px;font-weight:normal;font-family:'Liberation Sans',sans-serif;color:#1a1a1a;-webkit-text-stroke:0.2px #1a1a1a">fonts_emui.xml</div>
<div class="a" style="left:192.50px;top:515.00px;line-height:11.57px;font-size:8.9px;font-weight:normal;font-family:'Liberation Sans',sans-serif;letter-spacing:-0.023px;color:#6a6a6a;-webkit-text-stroke:0.15px #6a6a6a">2018/8/8 0:01</div>
<div class="a" style="left:291.00px;top:515.00px;line-height:11.57px;font-size:8.9px;font-weight:normal;font-family:'Liberation Sans',sans-serif;color:#6a6a6a;-webkit-text-stroke:0.15px #6a6a6a">XML 文档</div>
<div class="a" style="left:394.81px;top:515.00px;line-height:11.57px;font-size:8.9px;font-weight:normal;font-family:'Liberation Sans',sans-serif;color:#6a6a6a;-webkit-text-stroke:0.15px #6a6a6a">35 KB</div>
<svg style="left:15px;top:528.29px" width="9" height="12"><path d="M0.5 0.5 H5.5 L8.5 3.5 V11.5 H0.5 Z" fill="#fff" stroke="#a4a4a4" stroke-width="0.8"/><path d="M5.5 0.5 V3.5 H8.5" fill="none" stroke="#c4c4c4" stroke-width="0.6"/></svg>
<div class="a" style="left:28.00px;top:529.43px;line-height:11.57px;font-size:8.9px;font-weight:normal;font-family:'Liberation Sans',sans-serif;color:#1a1a1a;-webkit-text-stroke:0.2px #1a1a1a">fs_config_dirs</div>
<div class="a" style="left:192.50px;top:529.43px;line-height:11.57px;font-size:8.9px;font-weight:normal;font-family:'Liberation Sans',sans-serif;letter-spacing:-0.023px;color:#6a6a6a;-webkit-text-stroke:0.15px #6a6a6a">2018/8/8 0:01</div>
<div class="a" style="left:291.00px;top:529.43px;line-height:11.57px;font-size:8.9px;font-weight:normal;font-family:'Liberation Sans',sans-serif;color:#6a6a6a;-webkit-text-stroke:0.15px #6a6a6a">文件</div>
<div class="a" style="left:399.75px;top:529.43px;line-height:11.57px;font-size:8.9px;font-weight:normal;font-family:'Liberation Sans',sans-serif;color:#6a6a6a;-webkit-text-stroke:0.15px #6a6a6a">1 KB</div>
<svg style="left:15px;top:542.72px" width="9" height="12"><path d="M0.5 0.5 H5.5 L8.5 3.5 V11.5 H0.5 Z" fill="#fff" stroke="#a4a4a4" stroke-width="0.8"/><path d="M5.5 0.5 V3.5 H8.5" fill="none" stroke="#c4c4c4" stroke-width="0.6"/></svg>
<div class="a" style="left:28.00px;top:543.86px;line-height:11.57px;font-size:8.9px;font-weight:normal;font-family:'Liberation Sans',sans-serif;color:#1a1a1a;-webkit-text-stroke:0.2px #1a1a1a">fs_config_files</div>
<div class="a" style="left:192.50px;top:543.86px;line-height:11.57px;font-size:8.9px;font-weight:normal;font-family:'Liberation Sans',sans-serif;letter-spacing:-0.023px;color:#6a6a6a;-webkit-text-stroke:0.15px #6a6a6a">2018/8/8 0:01</div>
<div class="a" style="left:291.00px;top:543.86px;line-height:11.57px;font-size:8.9px;font-weight:normal;font-family:'Liberation Sans',sans-serif;color:#6a6a6a;-webkit-text-stroke:0.15px #6a6a6a">文件</div>
<div class="a" style="left:399.75px;top:543.86px;line-height:11.57px;font-size:8.9px;font-weight:normal;font-family:'Liberation Sans',sans-serif;color:#6a6a6a;-webkit-text-stroke:0.15px #6a6a6a">4 KB</div>
<svg style="left:14px;top:557.65px" width="11" height="11"><path d="M2.8 7.6 V0.9 H9.8" fill="none" stroke="#1e1e1e" stroke-width="1.15"/><path d="M8 1.2 V9.3 H2 Q0.8 9.3 0.8 8.4 Q0.8 7.6 2.8 7.6" fill="none" stroke="#1e1e1e" stroke-width="1.15"/><path d="M9.8 0.9 L9.8 2" stroke="#1e1e1e" stroke-width="1.4"/></svg>
<div class="a" style="left:28.00px;top:558.29px;line-height:11.57px;font-size:8.9px;font-weight:normal;font-family:'Liberation Sans',sans-serif;color:#1a1a1a;-webkit-text-stroke:0.2px #1a1a1a">gc_config.json</div>
<div class="a" style="left:192.50px;top:558.29px;line-height:11.57px;font-size:8.9px;font-weight:normal;font-family:'Liberation Sans',sans-serif;letter-spacing:-0.023px;color:#6a6a6a;-webkit-text-stroke:0.15px #6a6a6a">2018/8/8 0:01</div>
<div class="a" style="left:291.00px;top:558.29px;line-height:11.57px;font-size:8.9px;font-weight:normal;font-family:'Liberation Sans',sans-serif;color:#6a6a6a;-webkit-text-stroke:0.15px #6a6a6a">JSON File</div>
<div class="a" style="left:399.75px;top:558.29px;line-height:11.57px;font-size:8.9px;font-weight:normal;font-family:'Liberation Sans',sans-serif;color:#6a6a6a;-webkit-text-stroke:0.15px #6a6a6a">1 KB</div>
<svg style="left:15px;top:571.58px" width="9" height="12"><path d="M0.5 0.5 H5.5 L8.5 3.5 V11.5 H0.5 Z" fill="#fff" stroke="#a4a4a4" stroke-width="0.8"/><path d="M5.5 0.5 V3.5 H8.5" fill="none" stroke="#c4c4c4" stroke-width="0.6"/></svg>
<div class="a" style="left:28.00px;top:572.72px;line-height:11.57px;font-size:8.9px;font-weight:normal;font-family:'Liberation Sans',sans-serif;color:#1a1a1a;-webkit-text-stroke:0.2px #1a1a1a">gps.conf</div>
<div class="a" style="left:192.50px;top:572.72px;line-height:11.57px;font-size:8.9px;font-weight:normal;font-family:'Liberation Sans',sans-serif;letter-spacing:-0.023px;color:#6a6a6a;-webkit-text-stroke:0.15px #6a6a6a">2018/8/8 0:01</div>
<div class="a" style="left:291.00px;top:572.72px;line-height:11.57px;font-size:8.9px;font-weight:normal;font-family:'Liberation Sans',sans-serif;color:#6a6a6a;-webkit-text-stroke:0.15px #6a6a6a">CONF 文件</div>
<div class="a" style="left:399.75px;top:572.72px;line-height:11.57px;font-size:8.9px;font-weight:normal;font-family:'Liberation Sans',sans-serif;color:#6a6a6a;-webkit-text-stroke:0.15px #6a6a6a">1 KB</div>
<svg style="left:15px;top:586.01px" width="9" height="12"><path d="M0.5 0.5 H5.5 L8.5 3.5 V11.5 H0.5 Z" fill="#fff" stroke="#a4a4a4" stroke-width="0.8"/><path d="M5.5 0.5 V3.5 H8.5" fill="none" stroke="#c4c4c4" stroke-width="0.6"/></svg>
<div class="a" style="left:28.00px;top:587.15px;line-height:11.57px;font-size:8.9px;font-weight:normal;font-family:'Liberation Sans',sans-serif;color:#1a1a1a;-webkit-text-stroke:0.2px #1a1a1a">gps_debug.conf</div>
<div class="a" style="left:192.50px;top:587.15px;line-height:11.57px;font-size:8.9px;font-weight:normal;font-family:'Liberation Sans',sans-serif;letter-spacing:-0.023px;color:#6a6a6a;-webkit-text-stroke:0.15px #6a6a6a">2018/8/8 0:01</div>
<div class="a" style="left:291.00px;top:587.15px;line-height:11.57px;font-size:8.9px;font-weight:normal;font-family:'Liberation Sans',sans-serif;color:#6a6a6a;-webkit-text-stroke:0.15px #6a6a6a">CONF 文件</div>
<div class="a" style="left:399.75px;top:587.15px;line-height:11.57px;font-size:8.9px;font-weight:normal;font-family:'Liberation Sans',sans-serif;color:#6a6a6a;-webkit-text-stroke:0.15px #6a6a6a">1 KB</div>
<svg style="left:15px;top:600.44px" width="9" height="12"><path d="M0.5 0.5 H5.5 L8.5 3.5 V11.5 H0.5 Z" fill="#fff" stroke="#a4a4a4" stroke-width="0.8"/><path d="M5.5 0.5 V3.5 H8.5" fill="none" stroke="#c4c4c4" stroke-width="0.6"/></svg>
<div class="a" style="left:28.00px;top:601.58px;line-height:11.57px;font-size:8.9px;font-weight:normal;font-family:'Liberation Sans',sans-serif;color:#1a1a1a;-webkit-text-stroke:0.2px #1a1a1a">hilog_domains.conf</div>
<div class="a" style="left:192.50px;top:601.58px;line-height:11.57px;font-size:8.9px;font-weight:normal;font-family:'Liberation Sans',sans-serif;letter-spacing:-0.023px;color:#6a6a6a;-webkit-text-stroke:0.15px #6a6a6a">2018/8/8 0:01</div>
<div class="a" style="left:291.00px;top:601.58px;line-height:11.57px;font-size:8.9px;font-weight:normal;font-family:'Liberation Sans',sans-serif;color:#6a6a6a;-webkit-text-stroke:0.15px #6a6a6a">CONF 文件</div>
<div class="a" style="left:399.75px;top:601.58px;line-height:11.57px;font-size:8.9px;font-weight:normal;font-family:'Liberation Sans',sans-serif;color:#6a6a6a;-webkit-text-stroke:0.15px #6a6a6a">2 KB</div>
<svg style="left:15px;top:614.87px" width="9" height="12"><path d="M0.5 0.5 H5.5 L8.5 3.5 V11.5 H0.5 Z" fill="#fff" stroke="#a4a4a4" stroke-width="0.8"/><path d="M5.5 0.5 V3.5 H8.5" fill="none" stroke="#c4c4c4" stroke-width="0.6"/></svg>
<div class="a" style="left:28.00px;top:616.01px;line-height:11.57px;font-size:8.9px;font-weight:normal;font-family:'Liberation Sans',sans-serif;color:#1a1a1a;-webkit-text-stroke:0.2px #1a1a1a">hilog_flowcontrol_quota.conf</div>
<div class="a" style="left:192.50px;top:616.01px;line-height:11.57px;font-size:8.9px;font-weight:normal;font-family:'Liberation Sans',sans-serif;letter-spacing:-0.023px;color:#6a6a6a;-webkit-text-stroke:0.15px #6a6a6a">2018/8/8 0:01</div>
<div class="a" style="left:291.00px;top:616.01px;line-height:11.57px;font-size:8.9px;font-weight:normal;font-family:'Liberation Sans',sans-serif;color:#6a6a6a;-webkit-text-stroke:0.15px #6a6a6a">CONF 文件</div>
<div class="a" style="left:399.75px;top:616.01px;line-height:11.57px;font-size:8.9px;font-weight:normal;font-family:'Liberation Sans',sans-serif;color:#6a6a6a;-webkit-text-stroke:0.15px #6a6a6a">1 KB</div>
<svg style="left:15px;top:629.30px" width="9" height="12"><path d="M0.5 0.5 H5.5 L8.5 3.5 V11.5 H0.5 Z" fill="#fff" stroke="#a4a4a4" stroke-width="0.8"/><path d="M5.5 0.5 V3.5 H8.5" fill="none" stroke="#c4c4c4" stroke-width="0.6"/></svg>
<div class="a" style="left:28.00px;top:630.44px;line-height:11.57px;font-size:8.9px;font-weight:normal;font-family:'Liberation Sans',sans-serif;color:#1a1a1a;-webkit-text-stroke:0.2px #1a1a1a">hosts</div>
<div class="a" style="left:192.50px;top:630.44px;line-height:11.57px;font-size:8.9px;font-weight:normal;font-family:'Liberation Sans',sans-serif;letter-spacing:-0.023px;color:#6a6a6a;-webkit-text-stroke:0.15px #6a6a6a">2018/8/8 0:01</div>
<div class="a" style="left:291.00px;top:630.44px;line-height:11.57px;font-size:8.9px;font-weight:normal;font-family:'Liberation Sans',sans-serif;color:#6a6a6a;-webkit-text-stroke:0.15px #6a6a6a">文件</div>
<div class="a" style="left:399.75px;top:630.44px;line-height:11.57px;font-size:8.9px;font-weight:normal;font-family:'Liberation Sans',sans-serif;color:#6a6a6a;-webkit-text-stroke:0.15px #6a6a6a">1 KB</div>
<svg style="left:14px;top:644.23px" width="11" height="11"><path d="M2.8 7.6 V0.9 H9.8" fill="none" stroke="#1e1e1e" stroke-width="1.15"/><path d="M8 1.2 V9.3 H2 Q0.8 9.3 0.8 8.4 Q0.8 7.6 2.8 7.6" fill="none" stroke="#1e1e1e" stroke-width="1.15"/><path d="M9.8 0.9 L9.8 2" stroke="#1e1e1e" stroke-width="1.4"/></svg>
<div class="a" style="left:28.00px;top:644.87px;line-height:11.57px;font-size:8.9px;font-weight:normal;font-family:'Liberation Sans',sans-serif;color:#1a1a1a;-webkit-text-stroke:0.2px #1a1a1a">hwcomtracecfg.json</div>
<div class="a" style="left:192.50px;top:644.87px;line-height:11.57px;font-size:8.9px;font-weight:normal;font-family:'Liberation Sans',sans-serif;letter-spacing:-0.023px;color:#6a6a6a;-webkit-text-stroke:0.15px #6a6a6a">2018/8/8 0:01</div>
<div class="a" style="left:291.00px;top:644.87px;line-height:11.57px;font-size:8.9px;font-weight:normal;font-family:'Liberation Sans',sans-serif;color:#6a6a6a;-webkit-text-stroke:0.15px #6a6a6a">JSON File</div>
<div class="a" style="left:399.75px;top:644.87px;line-height:11.57px;font-size:8.9px;font-weight:normal;font-family:'Liberation Sans',sans-serif;color:#6a6a6a;-webkit-text-stroke:0.15px #6a6a6a">6 KB</div>
<svg style="left:15px;top:658.16px" width="9" height="12"><path d="M0.5 0.5 H5.5 L8.5 3.5 V11.5 H0.5 Z" fill="#fff" stroke="#a4a4a4" stroke-width="0.8"/><path d="M5.5 0.5 V3.5 H8.5" fill="none" stroke="#c4c4c4" stroke-width="0.6"/><circle cx="4" cy="3.8" r="1.5" fill="#4a6a70"/><path d="M1.5 3.8 H6.5 M4 1.5 V6" stroke="#8ab" stroke-width="0.6"/><rect x="2.2" y="7" width="4.6" height="2.8" fill="#b8bcbc"/></svg>
<div class="a" style="left:28.00px;top:659.30px;line-height:11.57px;font-size:8.9px;font-weight:normal;font-family:'Liberation Sans',sans-serif;color:#1a1a1a;-webkit-text-stroke:0.2px #1a1a1a">HwResourceManager.xml</div>
<div class="a" style="left:192.50px;top:659.30px;line-height:11.57px;font-size:8.9px;font-weight:normal;font-family:'Liberation Sans',sans-serif;letter-spacing:-0.023px;color:#6a6a6a;-webkit-text-stroke:0.15px #6a6a6a">2018/8/8 0:01</div>
<div class="a" style="left:291.00px;top:659.30px;line-height:11.57px;font-size:8.9px;font-weight:normal;font-family:'Liberation Sans',sans-serif;color:#6a6a6a;-webkit-text-stroke:0.15px #6a6a6a">XML 文档</div>
<div class="a" style="left:394.81px;top:659.30px;line-height:11.57px;font-size:8.9px;font-weight:normal;font-family:'Liberation Sans',sans-serif;color:#6a6a6a;-webkit-text-stroke:0.15px #6a6a6a">18 KB</div>
<div class="r" style="left:426px;top:22px;width:774px;height:551px;background:transparent;box-shadow:0 4px 10px 0px rgba(0,0,0,0.20)"></div>
<div class="r" style="left:425px;top:22px;width:775px;height:20px;background:#ffffff;"></div>
<div class="r" style="left:425px;top:22px;width:3px;height:20px;background:#fdfdfd;"></div>
<div class="r" style="left:428px;top:42px;width:772px;height:531px;background:#333333;"></div>
<div class="r" style="left:425px;top:22px;width:1px;height:20px;background:#d4d4d4;"></div>
<svg style="left:428.5px;top:26.5px" width="12" height="12"><circle cx="6" cy="6" r="5.5" fill="#d8c040" stroke="#3a3320" stroke-width="1"/><path d="M3.5 3 V6.5 Q3.5 8 5 8 H6.5 M8.5 3 V6 M6 6 H9.5 M6.5 8 V10" fill="none" stroke="#111" stroke-width="1.5"/></svg>
<svg style="left:449px;top:27.5px" width="10" height="12"><path d="M0.5 0.5 H5.5 L8.5 3.5 V10.5 H0.5 Z" fill="#fff" stroke="#555" stroke-width="0.9"/><path d="M5.5 0.5 V3.5 H8.5" fill="none" stroke="#555" stroke-width="0.7"/></svg>
<svg style="left:463px;top:28.5px" width="12" height="9"><path d="M0.5 0.5 H4 L5 1.5 H11 V8.5 H0.5 Z" fill="#c89a48"/><path d="M0.5 3 H11.5 V8.5 H0.5 Z" fill="#eab55a"/></svg>
<svg style="left:478px;top:28px" width="11" height="11"><rect x="0.5" y="0.5" width="10" height="10" fill="#c8a2e0" stroke="#a07cc8" stroke-width="0.8"/><rect x="2.5" y="0.8" width="6" height="3.2" fill="#f6f0fa"/><rect x="2.5" y="6" width="6" height="4.5" fill="#f6f0fa"/></svg>
<svg style="left:492.5px;top:27.5px" width="12" height="12"><rect x="3" y="0.5" width="6" height="3" fill="#fff" stroke="#555" stroke-width="0.8"/><rect x="0.5" y="3.5" width="11" height="5" rx="1" fill="#3c7cc0"/><rect x="3" y="7" width="6" height="4.5" fill="#fff" stroke="#555" stroke-width="0.8"/></svg>
<svg style="left:515px;top:29px" width="13" height="9"><path d="M4.5 4.5 Q8 1.5 11 4 Q12.5 5.5 11.5 8" fill="none" stroke="#86aad6" stroke-width="2.3"/><path d="M0.5 2 L6.5 2.5 L2 8 Z" fill="#86aad6"/></svg>
<svg style="left:537.5px;top:29px" width="13" height="9"><path d="M8.5 4.5 Q5 1.5 2 4 Q0.5 5.5 1.5 8" fill="none" stroke="#86aad6" stroke-width="2.3"/><path d="M12.5 2 L6.5 2.5 L11 8 Z" fill="#86aad6"/></svg>
<svg style="left:554px;top:31px" width="5" height="6"><rect x="0" y="0" width="5" height="1" fill="#222"/><path d="M0 2.5 H5 L2.5 5.5 Z" fill="#222"/></svg>
<div class="a" style="left:783.75px;top:27.53px;line-height:10.79px;font-size:8.3px;font-weight:bold;font-family:'Liberation Sans',sans-serif;letter-spacing:-0.098px;color:#111;">[E:\Share\P40systemimage\system\etc\prop.default] - UltraEdit 64-bit</div>
<div class="r" style="left:428px;top:42px;width:772px;height:18px;background:#3c3c3c;"></div>
<div class="r" style="left:473px;top:43px;width:32px;height:17px;background:#323232;"></div>
<div class="a" style="left:435.50px;top:47.42px;line-height:10.4px;font-size:8px;font-weight:normal;font-family:'Liberation Sans',sans-serif;letter-spacing:0.156px;color:#a8a8a8;">文件(F)</div>
<div class="a" style="left:481.00px;top:47.42px;line-height:10.4px;font-size:8px;font-weight:normal;font-family:'Liberation Sans',sans-serif;letter-spacing:0.000px;color:#f2f2f2;">主页</div>
<div class="a" style="left:516.00px;top:47.42px;line-height:10.4px;font-size:8px;font-weight:normal;font-family:'Liberation Sans',sans-serif;letter-spacing:0.000px;color:#a8a8a8;">编辑</div>
<div class="a" style="left:550.50px;top:47.42px;line-height:10.4px;font-size:8px;font-weight:normal;font-family:'Liberation Sans',sans-serif;letter-spacing:0.000px;color:#a8a8a8;">格式</div>
<div class="a" style="left:584.50px;top:47.42px;line-height:10.4px;font-size:8px;font-weight:normal;font-family:'Liberation Sans',sans-serif;letter-spacing:0.000px;color:#a8a8a8;">视图</div>
<div class="a" style="left:619.00px;top:47.42px;line-height:10.4px;font-size:8px;font-weight:normal;font-family:'Liberation Sans',sans-serif;letter-spacing:0.000px;color:#a8a8a8;">编码</div>
<div class="a" style="left:653.00px;top:47.42px;line-height:10.4px;font-size:8px;font-weight:normal;font-family:'Liberation Sans',sans-serif;letter-spacing:0.000px;color:#a8a8a8;">项目</div>
<div class="a" style="left:688.00px;top:47.42px;line-height:10.4px;font-size:8px;font-weight:normal;font-family:'Liberation Sans',sans-serif;letter-spacing:0.000px;color:#a8a8a8;">布局</div>
<div class="a" style="left:722.00px;top:47.42px;line-height:10.4px;font-size:8px;font-weight:normal;font-family:'Liberation Sans',sans-serif;letter-spacing:0.000px;color:#a8a8a8;">窗口</div>
<div class="a" style="left:756.50px;top:47.42px;line-height:10.4px;font-size:8px;font-weight:normal;font-family:'Liberation Sans',sans-serif;letter-spacing:0.000px;color:#a8a8a8;">高级</div>
<div class="r" style="left:567.5px;top:61px;width:1px;height:65px;background:#474747;"></div>
<div class="r" style="left:751px;top:61px;width:1px;height:65px;background:#474747;"></div>
<div class="r" style="left:860.5px;top:61px;width:1px;height:65px;background:#474747;"></div>
<div class="r" style="left:937px;top:61px;width:1px;height:65px;background:#474747;"></div>
<div class="r" style="left:1060px;top:61px;width:1px;height:65px;background:#474747;"></div>
<div class="r" style="left:428px;top:112px;width:772px;height:14px;background:#2e2e2e;"></div>
<div class="a" style="left:485.00px;top:115.42px;line-height:10.4px;font-size:8px;font-weight:normal;font-family:'Liberation Sans',sans-serif;letter-spacing:0.000px;color:#7c7c7c;">剪贴板</div>
<div class="a" style="left:651.00px;top:115.42px;line-height:10.4px;font-size:8px;font-weight:normal;font-family:'Liberation Sans',sans-serif;letter-spacing:0.000px;color:#7c7c7c;">搜索</div>
<div class="a" style="left:797.00px;top:115.42px;line-height:10.4px;font-size:8px;font-weight:normal;font-family:'Liberation Sans',sans-serif;letter-spacing:0.000px;color:#7c7c7c;">导航</div>
<div class="a" style="left:890.50px;top:115.42px;line-height:10.4px;font-size:8px;font-weight:normal;font-family:'Liberation Sans',sans-serif;letter-spacing:0.000px;color:#7c7c7c;">书签</div>
<div class="a" style="left:987.00px;top:115.42px;line-height:10.4px;font-size:8px;font-weight:normal;font-family:'Liberation Sans',sans-serif;letter-spacing:0.221px;color:#7c7c7c;">Extras</div>
<div class="a" style="left:1141.00px;top:115.42px;line-height:10.4px;font-size:8px;font-weight:normal;font-family:'Liberation Sans',sans-serif;letter-spacing:0.000px;color:#7c7c7c;">活动文件</div>
<div class="r" style="left:428px;top:126px;width:772px;height:1px;background:#262626;"></div>
<svg style="left:437px;top:65px" width="22" height="22"><rect x="1" y="2.5" width="13" height="15" fill="#f0b258" stroke="#c0852a" stroke-width="0.6"/><rect x="4" y="0.5" width="7" height="3.5" fill="#d99a3a"/><path d="M10 8 H17 L20 11 V21 H10 Z" fill="#fff" stroke="#3a78b8" stroke-width="0.8"/><rect x="12" y="12" width="6" height="0.9" fill="#3a78b8"/><rect x="12" y="14.5" width="6" height="0.9" fill="#3a78b8"/><rect x="12" y="17" width="6" height="0.9" fill="#3a78b8"/></svg>
<div class="a" style="left:440.00px;top:90.92px;line-height:10.4px;font-size:8px;font-weight:normal;font-family:'Liberation Sans',sans-serif;letter-spacing:0.000px;color:#e8e8e8;">粘贴</div>
<svg style="left:446px;top:103px" width="5" height="3"><path d="M0 0 H5 L2.5 3 Z" fill="#ccc"/></svg>
<svg style="left:467px;top:66px" width="11" height="11"><rect x="0.5" y="0.5" width="6" height="8" fill="#555"/><rect x="3.5" y="3" width="6.5" height="7.5" fill="#6a6a6a"/></svg>
<div class="a" style="left:480.00px;top:67.42px;line-height:10.4px;font-size:8px;font-weight:normal;font-family:'Liberation Sans',sans-serif;letter-spacing:0.000px;color:#6c6c6c;">复制</div>
<svg style="left:499px;top:70px" width="5" height="3"><path d="M0 0 H5 L2.5 3 Z" fill="#ddd"/></svg>
<svg style="left:508px;top:66px" width="12" height="11"><path d="M1 0 L8 8 M11 0 L4 8" stroke="#3f5f80" stroke-width="1.5"/><circle cx="3" cy="9" r="1.8" fill="#3f5f80"/><circle cx="9" cy="9" r="1.8" fill="#3f5f80"/></svg>
<div class="a" style="left:521.00px;top:67.42px;line-height:10.4px;font-size:8px;font-weight:normal;font-family:'Liberation Sans',sans-serif;letter-spacing:0.000px;color:#6c6c6c;">剪切</div>
<svg style="left:539px;top:70px" width="5" height="3"><path d="M0 0 H5 L2.5 3 Z" fill="#ddd"/></svg>
<svg style="left:463px;top:80px" width="12" height="13"><rect x="0.5" y="1.5" width="9" height="10" fill="#ecd9a8"/><rect x="2.5" y="0" width="5" height="2.5" fill="#c9a060"/><rect x="5.5" y="6" width="6" height="7" rx="2" fill="#2d6fb0"/></svg>
<div class="a" style="left:478.00px;top:81.10px;line-height:11.05px;font-size:8.5px;font-weight:normal;font-family:'Liberation Sans',sans-serif;letter-spacing:-0.212px;color:#e4e4e4;">Windows</div>
<div class="a" style="left:513.50px;top:81.92px;line-height:10.4px;font-size:8px;font-weight:normal;font-family:'Liberation Sans',sans-serif;letter-spacing:-0.333px;color:#e4e4e4;">剪贴板</div>
<div class="r" style="left:535px;top:79px;width:19px;height:14px;background:#2d2d2d;"></div>
<div class="r" style="left:554px;top:79px;width:8px;height:14px;background:#444;"></div>
<svg style="left:556px;top:85px" width="5" height="3"><path d="M0 0 H5 L2.5 3 Z" fill="#ddd"/></svg>
<svg style="left:576px;top:65px" width="20" height="21"><rect x="0" y="7" width="8" height="14" fill="#777"/><rect x="12" y="7" width="8" height="14" fill="#777"/><rect x="2" y="1" width="4" height="7" fill="#8a8a8a"/><rect x="14" y="1" width="4" height="7" fill="#8a8a8a"/><rect x="8" y="9" width="4" height="6" fill="#5a5a5a"/><rect x="3.2" y="2" width="1.5" height="3" fill="#fff"/><rect x="15.2" y="2" width="1.5" height="3" fill="#fff"/><rect x="3.2" y="6" width="1.5" height="4" fill="#fff"/><rect x="15.2" y="6" width="1.5" height="4" fill="#fff"/><rect x="2" y="12" width="1.5" height="7" fill="#fff"/><rect x="16.5" y="12" width="1.5" height="7" fill="#fff"/></svg>
<div class="a" style="left:577.00px;top:90.42px;line-height:10.4px;font-size:8px;font-weight:normal;font-family:'Liberation Sans',sans-serif;letter-spacing:0.000px;color:#e8e8e8;">查找</div>
<svg style="left:601px;top:65px" width="12" height="12"><rect x="1" y="1" width="3" height="8" fill="#8a8a8a"/><rect x="6" y="1" width="3" height="8" fill="#8a8a8a"/><path d="M2 6 L6 10 L10 6 L6 3 Z" fill="#2c5f96"/></svg>
<div class="a" style="left:614.50px;top:66.92px;line-height:10.4px;font-size:8px;font-weight:normal;font-family:'Liberation Sans',sans-serif;letter-spacing:0.000px;color:#e8e8e8;">替换</div>
<svg style="left:601px;top:80px" width="12" height="12"><rect x="1" y="1" width="3" height="8" fill="#8a8a8a"/><rect x="6" y="1" width="3" height="8" fill="#8a8a8a"/><path d="M2 6 L6 10 L10 6 L6 3 Z" fill="#2c5f96"/></svg>
<div class="a" style="left:614.50px;top:81.92px;line-height:10.4px;font-size:8px;font-weight:normal;font-family:'Liberation Sans',sans-serif;letter-spacing:0.000px;color:#e8e8e8;">上一个</div>
<svg style="left:601px;top:95px" width="12" height="12"><rect x="1" y="1" width="3" height="8" fill="#8a8a8a"/><rect x="6" y="1" width="3" height="8" fill="#8a8a8a"/><path d="M2 6 L6 10 L10 6 L6 3 Z" fill="#2c5f96"/></svg>
<div class="a" style="left:614.50px;top:96.92px;line-height:10.4px;font-size:8px;font-weight:normal;font-family:'Liberation Sans',sans-serif;letter-spacing:0.000px;color:#e8e8e8;">下一个</div>
<svg style="left:648px;top:66px" width="22" height="20"><path d="M1 1 H21 L13 9 V19 H9 V9 Z" fill="#5e5e5e"/><path d="M11 9 V19" stroke="#888" stroke-width="1"/></svg>
<div class="a" style="left:641.50px;top:90.23px;line-height:9.75px;font-size:7.5px;font-weight:normal;font-family:'Liberation Sans',sans-serif;letter-spacing:-0.800px;color:#6a6a6a;">按选择过滤</div>
<svg style="left:702px;top:65px" width="22" height="21"><path d="M1 1 H8 L10 3 H19 V17 H1 Z" fill="#8a8a8a"/><path d="M4 6 H21 L17 17 H1 Z" fill="#f0b24a"/><rect x="12" y="12" width="3" height="8" fill="#ccc"/><rect x="16" y="12" width="3" height="8" fill="#ccc"/></svg>
<div class="a" style="left:682.00px;top:90.42px;line-height:10.4px;font-size:8px;font-weight:normal;font-family:'Liberation Sans',sans-serif;letter-spacing:-0.248px;color:#e8e8e8;">查找/在文件中替换</div>
<svg style="left:759px;top:66px" width="21" height="21"><rect x="0" y="0" width="21" height="21" rx="2" fill="#3aa882"/><path d="M4 9 H12 V5 L18 10.5 L12 16 V12 H4 Z" fill="#fff"/></svg>
<div class="a" style="left:757.50px;top:90.42px;line-height:10.4px;font-size:8px;font-weight:normal;font-family:'Liberation Sans',sans-serif;letter-spacing:0.000px;color:#e8e8e8;">转到行</div>
<svg style="left:790px;top:65.0px" width="11" height="11"><circle cx="5.5" cy="5.5" r="4.8" fill="none" stroke="#2a5a45" stroke-width="1"/><path d="M8 5.5 H3 M5 3.5 L3 5.5 L5 7.5" fill="none" stroke="#2a6a50" stroke-width="1"/></svg>
<svg style="left:790px;top:80.0px" width="11" height="11"><circle cx="5.5" cy="5.5" r="4.8" fill="none" stroke="#2a5a45" stroke-width="1"/><path d="M3 5.5 H8 M6 3.5 L8 5.5 L6 7.5" fill="none" stroke="#2a6a50" stroke-width="1"/></svg>
<svg style="left:809.5px;top:64.5px" width="13" height="12"><circle cx="6.5" cy="6" r="5.8" fill="#3b2f2f"/><g transform=""><path d="M11 6 H3.5 M6.5 2.8 L3.2 6 L6.5 9.2" fill="none" stroke="#c8503e" stroke-width="2"/></g></svg>
<div class="a" style="left:824.00px;top:66.42px;line-height:10.4px;font-size:8px;font-weight:normal;font-family:'Liberation Sans',sans-serif;letter-spacing:-0.500px;color:#6a6a6a;">上一更改</div>
<svg style="left:809.5px;top:79.5px" width="13" height="12"><circle cx="6.5" cy="6" r="5.8" fill="#3b2f2f"/><g transform="translate(13,0) scale(-1,1)"><path d="M11 6 H3.5 M6.5 2.8 L3.2 6 L6.5 9.2" fill="none" stroke="#c8503e" stroke-width="2"/></g></svg>
<div class="a" style="left:824.00px;top:81.42px;line-height:10.4px;font-size:8px;font-weight:normal;font-family:'Liberation Sans',sans-serif;letter-spacing:-0.500px;color:#6a6a6a;">下一更改</div>
<svg style="left:869px;top:66px" width="20" height="19"><path d="M14 0 L20 5 L6 19 L0 14 Z" fill="#d9483a"/><path d="M0 14 L3 19 L6 19" fill="#a83428"/></svg>
<div class="a" style="left:870.50px;top:91.42px;line-height:10.4px;font-size:8px;font-weight:normal;font-family:'Liberation Sans',sans-serif;letter-spacing:0.000px;color:#e8e8e8;">书签</div>
<svg style="left:876px;top:103px" width="5" height="3"><path d="M0 0 H5 L2.5 3 Z" fill="#ccc"/></svg>
<svg style="left:896px;top:65.5px" width="12" height="12"><path d="M6 0 L10 3 L3 10 L0 7 Z" fill="#d9483a"/><path d="M4 7 L7.5 4 V6 H11.5 V8 H7.5 V10 Z" fill="#4aa0d8"/></svg>
<div class="a" style="left:909.00px;top:67.42px;line-height:10.4px;font-size:8px;font-weight:normal;font-family:'Liberation Sans',sans-serif;letter-spacing:-0.667px;color:#e8e8e8;">上一个</div>
<svg style="left:896px;top:79.5px" width="12" height="12"><path d="M6 0 L10 3 L3 10 L0 7 Z" fill="#d9483a"/><path d="M12 7 L8.5 4 V6 H4.5 V8 H8.5 V10 Z" fill="#3ab060"/></svg>
<div class="a" style="left:909.00px;top:81.42px;line-height:10.4px;font-size:8px;font-weight:normal;font-family:'Liberation Sans',sans-serif;letter-spacing:-0.667px;color:#e8e8e8;">下一个</div>
<svg style="left:945px;top:65px" width="23" height="23"><path d="M0.5 0.5 H6 L7.5 2 H17.5 V14 H0.5 Z" fill="#8a8a8a"/><rect x="0.5" y="3" width="17" height="11" fill="#f2c66a"/><rect x="0" y="16" width="6" height="1.5" fill="#aaa"/><ellipse cx="14.5" cy="17.5" rx="7.5" ry="4" fill="#3d7ec9"/><circle cx="13" cy="14.5" r="3.5" fill="#3d7ec9"/></svg>
<div class="a" style="left:948.00px;top:91.42px;line-height:10.4px;font-size:8px;font-weight:normal;font-family:'Liberation Sans',sans-serif;letter-spacing:-0.370px;color:#e8e8e8;">FTP</div>
<svg style="left:953px;top:103px" width="5" height="3"><path d="M0 0 H5 L2.5 3 Z" fill="#ccc"/></svg>
<svg style="left:974px;top:65px" width="22" height="23"><rect x="0.5" y="0.5" width="21" height="19" fill="#3a3535" stroke="#8a8a8a" stroke-width="1"/><rect x="0.5" y="0.5" width="21" height="3" fill="#8a8a8a"/><rect x="10.5" y="0" width="1" height="20" fill="#8a8a8a"/><rect x="2" y="6" width="7" height="0.8" fill="#c84a4a"/><rect x="2" y="9" width="6" height="0.8" fill="#c84a4a"/><rect x="13" y="6" width="7" height="0.8" fill="#c84a4a"/><rect x="13" y="9" width="6" height="0.8" fill="#c84a4a"/><circle cx="11" cy="17" r="5.5" fill="#1c3f8f" stroke="#bbb" stroke-width="0.6"/><text x="11" y="19.5" font-size="6.5" font-weight="bold" text-anchor="middle" fill="#fff" font-family="Liberation Sans">UC</text></svg>
<div class="a" style="left:976.50px;top:91.42px;line-height:10.4px;font-size:8px;font-weight:normal;font-family:'Liberation Sans',sans-serif;letter-spacing:0.000px;color:#e8e8e8;">比较</div>
<svg style="left:1001.5px;top:65.3px" width="11" height="11"><circle cx="5.5" cy="5.5" r="5.2" fill="#2d9a2d"/><text x="5.5" y="8.3" font-size="7" font-weight="bold" text-anchor="middle" fill="#fff" font-family="Liberation Sans">U</text></svg>
<div class="a" style="left:1014.70px;top:66.79px;line-height:10.66px;font-size:8.2px;font-weight:normal;font-family:'Liberation Sans',sans-serif;letter-spacing:-0.109px;color:#e0e0e0;">UltraFinder</div>
<svg style="left:1001.5px;top:80.3px" width="11" height="11"><circle cx="5.5" cy="5.5" r="5.2" fill="#c23a3a"/><text x="5.5" y="8.3" font-size="7" font-weight="bold" text-anchor="middle" fill="#fff" font-family="Liberation Sans">&#8224;</text></svg>
<div class="a" style="left:1014.70px;top:81.79px;line-height:10.66px;font-size:8.2px;font-weight:normal;font-family:'Liberation Sans',sans-serif;letter-spacing:-0.431px;color:#e0e0e0;">UltraFTP</div>
<svg style="left:1092px;top:65px" width="24" height="23"><rect x="0.5" y="0.5" width="20" height="17.5" fill="#f4f4f4" stroke="#cfcfcf" stroke-width="0.5"/><rect x="0.5" y="0.5" width="20" height="2.5" fill="#2f6eb5"/><rect x="15" y="1.2" width="1" height="1" fill="#fff"/><rect x="17" y="1.2" width="1" height="1" fill="#fff"/><path d="M17 8 L23 14 H19.5 V22 H14.5 V14 H11 Z" fill="#7d3cb5"/></svg>
<div class="a" style="left:1065.75px;top:90.77px;line-height:9.88px;font-size:7.6px;font-weight:normal;font-family:'Liberation Sans',sans-serif;letter-spacing:-0.400px;color:#e8e8e8;">在默认应用程序中显示</div>
<svg style="left:1167px;top:66px" width="20" height="21"><rect x="0" y="0" width="9" height="13" fill="#9a9480"/><rect x="1" y="5" width="7" height="4" fill="#d8b060"/><path d="M7 5 H15 L19 9 V20 H7 Z" fill="#fff"/><rect x="9" y="13" width="8" height="5" fill="#e8b450"/></svg>
<div class="a" style="left:1145.00px;top:90.77px;line-height:9.88px;font-size:7.6px;font-weight:normal;font-family:'Liberation Sans',sans-serif;letter-spacing:0.234px;color:#e8e8e8;">复制文件路径/名</div>
<div class="r" style="left:428px;top:127px;width:772px;height:16px;background:#2f2f2f;"></div>
<div class="r" style="left:428px;top:127px;width:772px;height:1px;background:#3a3a3a;"></div>
<div class="r" style="left:511px;top:128px;width:1px;height:14px;background:#474747;"></div>
<div class="r" style="left:582px;top:128px;width:1px;height:14px;background:#474747;"></div>
<div class="r" style="left:678px;top:128px;width:1px;height:14px;background:#474747;"></div>
<div class="r" style="left:762px;top:128px;width:1px;height:14px;background:#474747;"></div>
<div class="r" style="left:880px;top:128px;width:1px;height:14px;background:#474747;"></div>
<div class="r" style="left:947px;top:128px;width:1px;height:14px;background:#474747;"></div>
<div class="r" style="left:1018px;top:128px;width:1px;height:14px;background:#474747;"></div>
<div class="r" style="left:1097px;top:128px;width:1px;height:14px;background:#474747;"></div>
<div class="r" style="left:447px;top:132.5px;width:39px;height:5px;background:#a8a8a8;filter:blur(1px);opacity:.85"></div>
<div class="r" style="left:449px;top:131.5px;width:15.600000000000001px;height:2px;background:#bbb;filter:blur(.8px);opacity:.5"></div>
<div class="r" style="left:530px;top:132.5px;width:27px;height:5px;background:#a8a8a8;filter:blur(1px);opacity:.85"></div>
<div class="r" style="left:532px;top:131.5px;width:10.8px;height:2px;background:#bbb;filter:blur(.8px);opacity:.5"></div>
<div class="r" style="left:602px;top:132.5px;width:52px;height:5px;background:#a8a8a8;filter:blur(1px);opacity:.85"></div>
<div class="r" style="left:604px;top:131.5px;width:20.8px;height:2px;background:#bbb;filter:blur(.8px);opacity:.5"></div>
<div class="r" style="left:696px;top:132.5px;width:43px;height:5px;background:#a8a8a8;filter:blur(1px);opacity:.85"></div>
<div class="r" style="left:698px;top:131.5px;width:17.2px;height:2px;background:#bbb;filter:blur(.8px);opacity:.5"></div>
<div class="r" style="left:780px;top:132.5px;width:73px;height:5px;background:#a8a8a8;filter:blur(1px);opacity:.85"></div>
<div class="r" style="left:782px;top:131.5px;width:29.200000000000003px;height:2px;background:#bbb;filter:blur(.8px);opacity:.5"></div>
<div class="r" style="left:897px;top:132.5px;width:25px;height:5px;background:#a8a8a8;filter:blur(1px);opacity:.85"></div>
<div class="r" style="left:899px;top:131.5px;width:10.0px;height:2px;background:#bbb;filter:blur(.8px);opacity:.5"></div>
<div class="r" style="left:966px;top:132.5px;width:46px;height:5px;background:#a8a8a8;filter:blur(1px);opacity:.85"></div>
<div class="r" style="left:968px;top:131.5px;width:18.400000000000002px;height:2px;background:#bbb;filter:blur(.8px);opacity:.5"></div>
<div class="r" style="left:1056px;top:132.5px;width:31px;height:5px;background:#a8a8a8;filter:blur(1px);opacity:.85"></div>
<div class="r" style="left:1058px;top:131.5px;width:12.4px;height:2px;background:#bbb;filter:blur(.8px);opacity:.5"></div>
<div class="r" style="left:500px;top:132.5px;width:4.5px;height:5px;background:#9a9a9a;filter:blur(.6px)"></div>
<div class="r" style="left:572.5px;top:132.5px;width:4.5px;height:5px;background:#9a9a9a;filter:blur(.6px)"></div>
<div class="r" style="left:669.5px;top:132.5px;width:4.5px;height:5px;background:#9a9a9a;filter:blur(.6px)"></div>
<div class="r" style="left:752.5px;top:132.5px;width:4.5px;height:5px;background:#9a9a9a;filter:blur(.6px)"></div>
<div class="r" style="left:870px;top:132.5px;width:4.5px;height:5px;background:#9a9a9a;filter:blur(.6px)"></div>
<div class="r" style="left:938.5px;top:132.5px;width:4.5px;height:5px;background:#9a9a9a;filter:blur(.6px)"></div>
<div class="r" style="left:1029px;top:132.5px;width:4.5px;height:5px;background:#9a9a9a;filter:blur(.6px)"></div>
<svg style="left:1099px;top:132px" width="10" height="8"><rect x="1" y="0.5" width="2" height="7" fill="#ddd"/><path d="M8.5 0.5 L4.5 4 L8.5 7.5" fill="none" stroke="#eee" stroke-width="1.8"/></svg>
<div class="r" style="left:1111.5px;top:127.5px;width:88.5px;height:16px;background:#1a88d8;"></div>
<div class="a" style="left:1130.00px;top:131.49px;line-height:10.66px;font-size:8.2px;font-weight:bold;font-family:'Liberation Sans',sans-serif;letter-spacing:-0.109px;color:#fff;">prop.default</div>
<svg style="left:1188px;top:131px" width="8" height="8"><path d="M1 1 L7 7 M7 1 L1 7" stroke="#fff" stroke-width="1.3"/></svg>
<div class="r" style="left:428px;top:143px;width:772px;height:15px;background:#3d3d3d;"></div>
<div class="r" style="left:458.3px;top:155px;width:1px;height:3px;background:#9cc4d4;"></div>
<div class="r" style="left:463.11px;top:156px;width:1px;height:2px;background:#9cc4d4;"></div>
<div class="r" style="left:467.92px;top:156px;width:1px;height:2px;background:#9cc4d4;"></div>
<div class="r" style="left:472.73px;top:156px;width:1px;height:2px;background:#9cc4d4;"></div>
<div class="r" style="left:477.54px;top:156px;width:1px;height:2px;background:#9cc4d4;"></div>
<div class="r" style="left:482.35px;top:155px;width:1px;height:3px;background:#9cc4d4;"></div>
<div class="r" style="left:487.16px;top:156px;width:1px;height:2px;background:#9cc4d4;"></div>
<div class="r" style="left:491.97px;top:156px;width:1px;height:2px;background:#9cc4d4;"></div>
<div class="r" style="left:496.78px;top:156px;width:1px;height:2px;background:#9cc4d4;"></div>
<div class="r" style="left:501.59px;top:156px;width:1px;height:2px;background:#9cc4d4;"></div>
<div class="r" style="left:506.4px;top:155px;width:1px;height:3px;background:#9cc4d4;"></div>
<div class="r" style="left:511.21px;top:156px;width:1px;height:2px;background:#9cc4d4;"></div>
<div class="r" style="left:516.02px;top:156px;width:1px;height:2px;background:#9cc4d4;"></div>
<div class="r" style="left:520.83px;top:156px;width:1px;height:2px;background:#9cc4d4;"></div>
<div class="r" style="left:525.64px;top:156px;width:1px;height:2px;background:#9cc4d4;"></div>
<div class="r" style="left:530.45px;top:155px;width:1px;height:3px;background:#9cc4d4;"></div>
<div class="r" style="left:535.26px;top:156px;width:1px;height:2px;background:#9cc4d4;"></div>
<div class="r" style="left:540.07px;top:156px;width:1px;height:2px;background:#9cc4d4;"></div>
<div class="r" style="left:544.88px;top:156px;width:1px;height:2px;background:#9cc4d4;"></div>
<div class="r" style="left:549.69px;top:156px;width:1px;height:2px;background:#9cc4d4;"></div>
<div class="r" style="left:554.5px;top:155px;width:1px;height:3px;background:#9cc4d4;"></div>
<div class="r" style="left:559.31px;top:156px;width:1px;height:2px;background:#9cc4d4;"></div>
<div class="r" style="left:564.12px;top:156px;width:1px;height:2px;background:#9cc4d4;"></div>
<div class="r" style="left:568.93px;top:156px;width:1px;height:2px;background:#9cc4d4;"></div>
<div class="r" style="left:573.74px;top:156px;width:1px;height:2px;background:#9cc4d4;"></div>
<div class="r" style="left:578.55px;top:155px;width:1px;height:3px;background:#9cc4d4;"></div>
<div class="r" style="left:583.36px;top:156px;width:1px;height:2px;background:#9cc4d4;"></div>
<div class="r" style="left:588.17px;top:156px;width:1px;height:2px;background:#9cc4d4;"></div>
<div class="r" style="left:592.98px;top:156px;width:1px;height:2px;background:#9cc4d4;"></div>
<div class="r" style="left:597.79px;top:156px;width:1px;height:2px;background:#9cc4d4;"></div>
<div class="r" style="left:602.6px;top:155px;width:1px;height:3px;background:#9cc4d4;"></div>
<div class="r" style="left:607.41px;top:156px;width:1px;height:2px;background:#9cc4d4;"></div>
<div class="r" style="left:612.22px;top:156px;width:1px;height:2px;background:#9cc4d4;"></div>
<div class="r" style="left:617.03px;top:156px;width:1px;height:2px;background:#9cc4d4;"></div>
<div class="r" style="left:621.84px;top:156px;width:1px;height:2px;background:#9cc4d4;"></div>
<div class="r" style="left:626.65px;top:155px;width:1px;height:3px;background:#9cc4d4;"></div>
<div class="r" style="left:631.46px;top:156px;width:1px;height:2px;background:#9cc4d4;"></div>
<div class="r" style="left:636.27px;top:156px;width:1px;height:2px;background:#9cc4d4;"></div>
<div class="r" style="left:641.08px;top:156px;width:1px;height:2px;background:#9cc4d4;"></div>
<div class="r" style="left:645.89px;top:156px;width:1px;height:2px;background:#9cc4d4;"></div>
<div class="r" style="left:650.7px;top:155px;width:1px;height:3px;background:#9cc4d4;"></div>
<div class="r" style="left:655.51px;top:156px;width:1px;height:2px;background:#9cc4d4;"></div>
<div class="r" style="left:660.32px;top:156px;width:1px;height:2px;background:#9cc4d4;"></div>
<div class="r" style="left:665.13px;top:156px;width:1px;height:2px;background:#9cc4d4;"></div>
<div class="r" style="left:669.94px;top:156px;width:1px;height:2px;background:#9cc4d4;"></div>
<div class="r" style="left:674.75px;top:155px;width:1px;height:3px;background:#9cc4d4;"></div>
<div class="r" style="left:679.56px;top:156px;width:1px;height:2px;background:#9cc4d4;"></div>
<div class="r" style="left:684.37px;top:156px;width:1px;height:2px;background:#9cc4d4;"></div>
<div class="r" style="left:689.18px;top:156px;width:1px;height:2px;background:#9cc4d4;"></div>
<div class="r" style="left:693.99px;top:156px;width:1px;height:2px;background:#9cc4d4;"></div>
<div class="r" style="left:698.8px;top:155px;width:1px;height:3px;background:#9cc4d4;"></div>
<div class="r" style="left:703.61px;top:156px;width:1px;height:2px;background:#9cc4d4;"></div>
<div class="r" style="left:708.42px;top:156px;width:1px;height:2px;background:#9cc4d4;"></div>
<div class="r" style="left:713.23px;top:156px;width:1px;height:2px;background:#9cc4d4;"></div>
<div class="r" style="left:718.04px;top:156px;width:1px;height:2px;background:#9cc4d4;"></div>
<div class="r" style="left:722.85px;top:155px;width:1px;height:3px;background:#9cc4d4;"></div>
<div class="r" style="left:727.66px;top:156px;width:1px;height:2px;background:#9cc4d4;"></div>
<div class="r" style="left:732.47px;top:156px;width:1px;height:2px;background:#9cc4d4;"></div>
<div class="r" style="left:737.28px;top:156px;width:1px;height:2px;background:#9cc4d4;"></div>
<div class="r" style="left:742.09px;top:156px;width:1px;height:2px;background:#9cc4d4;"></div>
<div class="r" style="left:746.9px;top:155px;width:1px;height:3px;background:#9cc4d4;"></div>
<div class="r" style="left:751.71px;top:156px;width:1px;height:2px;background:#9cc4d4;"></div>
<div class="r" style="left:756.52px;top:156px;width:1px;height:2px;background:#9cc4d4;"></div>
<div class="r" style="left:761.33px;top:156px;width:1px;height:2px;background:#9cc4d4;"></div>
<div class="r" style="left:766.14px;top:156px;width:1px;height:2px;background:#9cc4d4;"></div>
<div class="r" style="left:770.95px;top:155px;width:1px;height:3px;background:#9cc4d4;"></div>
<div class="r" style="left:775.76px;top:156px;width:1px;height:2px;background:#9cc4d4;"></div>
<div class="r" style="left:780.57px;top:156px;width:1px;height:2px;background:#9cc4d4;"></div>
<div class="r" style="left:785.38px;top:156px;width:1px;height:2px;background:#9cc4d4;"></div>
<div class="r" style="left:790.19px;top:156px;width:1px;height:2px;background:#9cc4d4;"></div>
<div class="r" style="left:795.0px;top:155px;width:1px;height:3px;background:#9cc4d4;"></div>
<div class="r" style="left:799.81px;top:156px;width:1px;height:2px;background:#9cc4d4;"></div>
<div class="r" style="left:804.62px;top:156px;width:1px;height:2px;background:#9cc4d4;"></div>
<div class="r" style="left:809.43px;top:156px;width:1px;height:2px;background:#9cc4d4;"></div>
<div class="r" style="left:814.24px;top:156px;width:1px;height:2px;background:#9cc4d4;"></div>
<div class="r" style="left:819.05px;top:155px;width:1px;height:3px;background:#9cc4d4;"></div>
<div class="r" style="left:823.86px;top:156px;width:1px;height:2px;background:#9cc4d4;"></div>
<div class="r" style="left:828.67px;top:156px;width:1px;height:2px;background:#9cc4d4;"></div>
<div class="r" style="left:833.48px;top:156px;width:1px;height:2px;background:#9cc4d4;"></div>
<div class="r" style="left:838.29px;top:156px;width:1px;height:2px;background:#9cc4d4;"></div>
<div class="r" style="left:843.1px;top:155px;width:1px;height:3px;background:#9cc4d4;"></div>
<div class="r" style="left:847.91px;top:156px;width:1px;height:2px;background:#9cc4d4;"></div>
<div class="r" style="left:852.72px;top:156px;width:1px;height:2px;background:#9cc4d4;"></div>
<div class="r" style="left:857.53px;top:156px;width:1px;height:2px;background:#9cc4d4;"></div>
<div class="r" style="left:862.34px;top:156px;width:1px;height:2px;background:#9cc4d4;"></div>
<div class="r" style="left:867.15px;top:155px;width:1px;height:3px;background:#9cc4d4;"></div>
<div class="r" style="left:871.96px;top:156px;width:1px;height:2px;background:#9cc4d4;"></div>
<div class="r" style="left:876.77px;top:156px;width:1px;height:2px;background:#9cc4d4;"></div>
<div class="r" style="left:881.58px;top:156px;width:1px;height:2px;background:#9cc4d4;"></div>
<div class="r" style="left:886.39px;top:156px;width:1px;height:2px;background:#9cc4d4;"></div>
<div class="r" style="left:891.2px;top:155px;width:1px;height:3px;background:#9cc4d4;"></div>
<div class="r" style="left:896.01px;top:156px;width:1px;height:2px;background:#9cc4d4;"></div>
<div class="r" style="left:900.82px;top:156px;width:1px;height:2px;background:#9cc4d4;"></div>
<div class="r" style="left:905.63px;top:156px;width:1px;height:2px;background:#9cc4d4;"></div>
<div class="r" style="left:910.44px;top:156px;width:1px;height:2px;background:#9cc4d4;"></div>
<div class="r" style="left:915.25px;top:155px;width:1px;height:3px;background:#9cc4d4;"></div>
<div class="r" style="left:920.06px;top:156px;width:1px;height:2px;background:#9cc4d4;"></div>
<div class="r" style="left:924.87px;top:156px;width:1px;height:2px;background:#9cc4d4;"></div>
<div class="r" style="left:929.68px;top:156px;width:1px;height:2px;background:#9cc4d4;"></div>
<div class="r" style="left:934.49px;top:156px;width:1px;height:2px;background:#9cc4d4;"></div>
<div class="r" style="left:939.3px;top:155px;width:1px;height:3px;background:#9cc4d4;"></div>
<div class="r" style="left:944.11px;top:156px;width:1px;height:2px;background:#9cc4d4;"></div>
<div class="r" style="left:948.92px;top:156px;width:1px;height:2px;background:#9cc4d4;"></div>
<div class="r" style="left:953.73px;top:156px;width:1px;height:2px;background:#9cc4d4;"></div>
<div class="r" style="left:958.54px;top:156px;width:1px;height:2px;background:#9cc4d4;"></div>
<div class="r" style="left:963.35px;top:155px;width:1px;height:3px;background:#9cc4d4;"></div>
<div class="r" style="left:968.16px;top:156px;width:1px;height:2px;background:#9cc4d4;"></div>
<div class="r" style="left:972.97px;top:156px;width:1px;height:2px;background:#9cc4d4;"></div>
<div class="r" style="left:977.78px;top:156px;width:1px;height:2px;background:#9cc4d4;"></div>
<div class="r" style="left:982.59px;top:156px;width:1px;height:2px;background:#9cc4d4;"></div>
<div class="r" style="left:987.4px;top:155px;width:1px;height:3px;background:#9cc4d4;"></div>
<div class="r" style="left:992.21px;top:156px;width:1px;height:2px;background:#9cc4d4;"></div>
<div class="r" style="left:997.02px;top:156px;width:1px;height:2px;background:#9cc4d4;"></div>
<div class="r" style="left:1001.83px;top:156px;width:1px;height:2px;background:#9cc4d4;"></div>
<div class="r" style="left:1006.64px;top:156px;width:1px;height:2px;background:#9cc4d4;"></div>
<div class="r" style="left:1011.45px;top:155px;width:1px;height:3px;background:#9cc4d4;"></div>
<div class="r" style="left:1016.26px;top:156px;width:1px;height:2px;background:#9cc4d4;"></div>
<div class="r" style="left:1021.07px;top:156px;width:1px;height:2px;background:#9cc4d4;"></div>
<div class="r" style="left:1025.88px;top:156px;width:1px;height:2px;background:#9cc4d4;"></div>
<div class="r" style="left:1030.69px;top:156px;width:1px;height:2px;background:#9cc4d4;"></div>
<div class="r" style="left:1035.5px;top:155px;width:1px;height:3px;background:#9cc4d4;"></div>
<div class="r" style="left:1040.31px;top:156px;width:1px;height:2px;background:#9cc4d4;"></div>
<div class="r" style="left:1045.12px;top:156px;width:1px;height:2px;background:#9cc4d4;"></div>
<div class="r" style="left:1049.93px;top:156px;width:1px;height:2px;background:#9cc4d4;"></div>
<div class="r" style="left:1054.74px;top:156px;width:1px;height:2px;background:#9cc4d4;"></div>
<div class="r" style="left:1059.55px;top:155px;width:1px;height:3px;background:#9cc4d4;"></div>
<div class="r" style="left:1064.36px;top:156px;width:1px;height:2px;background:#9cc4d4;"></div>
<div class="r" style="left:1069.17px;top:156px;width:1px;height:2px;background:#9cc4d4;"></div>
<div class="r" style="left:1073.98px;top:156px;width:1px;height:2px;background:#9cc4d4;"></div>
<div class="r" style="left:1078.79px;top:156px;width:1px;height:2px;background:#9cc4d4;"></div>
<div class="r" style="left:1083.6px;top:155px;width:1px;height:3px;background:#9cc4d4;"></div>
<div class="r" style="left:1088.41px;top:156px;width:1px;height:2px;background:#9cc4d4;"></div>
<div class="r" style="left:1093.22px;top:156px;width:1px;height:2px;background:#9cc4d4;"></div>
<div class="r" style="left:1098.03px;top:156px;width:1px;height:2px;background:#9cc4d4;"></div>
<div class="r" style="left:1102.84px;top:156px;width:1px;height:2px;background:#9cc4d4;"></div>
<div class="r" style="left:1107.65px;top:155px;width:1px;height:3px;background:#9cc4d4;"></div>
<div class="r" style="left:1112.46px;top:156px;width:1px;height:2px;background:#9cc4d4;"></div>
<div class="r" style="left:1117.27px;top:156px;width:1px;height:2px;background:#9cc4d4;"></div>
<div class="r" style="left:1122.08px;top:156px;width:1px;height:2px;background:#9cc4d4;"></div>
<div class="r" style="left:1126.89px;top:156px;width:1px;height:2px;background:#9cc4d4;"></div>
<div class="r" style="left:1131.7px;top:155px;width:1px;height:3px;background:#9cc4d4;"></div>
<div class="r" style="left:1136.51px;top:156px;width:1px;height:2px;background:#9cc4d4;"></div>
<div class="r" style="left:1141.32px;top:156px;width:1px;height:2px;background:#9cc4d4;"></div>
<div class="r" style="left:1146.13px;top:156px;width:1px;height:2px;background:#9cc4d4;"></div>
<div class="r" style="left:1150.94px;top:156px;width:1px;height:2px;background:#9cc4d4;"></div>
<div class="r" style="left:1155.75px;top:155px;width:1px;height:3px;background:#9cc4d4;"></div>
<div class="r" style="left:1160.56px;top:156px;width:1px;height:2px;background:#9cc4d4;"></div>
<div class="r" style="left:1165.37px;top:156px;width:1px;height:2px;background:#9cc4d4;"></div>
<div class="r" style="left:1170.18px;top:156px;width:1px;height:2px;background:#9cc4d4;"></div>
<div class="r" style="left:1174.99px;top:156px;width:1px;height:2px;background:#9cc4d4;"></div>
<div class="r" style="left:1179.8px;top:155px;width:1px;height:3px;background:#9cc4d4;"></div>
<div class="r" style="left:1184.61px;top:156px;width:1px;height:2px;background:#9cc4d4;"></div>
<div class="r" style="left:1189.42px;top:156px;width:1px;height:2px;background:#9cc4d4;"></div>
<div class="r" style="left:1194.23px;top:156px;width:1px;height:2px;background:#9cc4d4;"></div>
<div class="r" style="left:1199.04px;top:156px;width:1px;height:2px;background:#9cc4d4;"></div>
<div class="r" style="left:458px;top:158px;width:742px;height:1px;background:#9cc4d4;"></div>
<div class="r" style="left:432px;top:158px;width:26px;height:1px;background:#d0d0d0;"></div>
<div class="a" style="left:457.00px;top:148.42px;line-height:10.4px;font-size:8px;font-weight:normal;font-family:'Liberation Sans',sans-serif;color:#c8c8c8;">0</div>
<div class="a" style="left:502.40px;top:148.42px;line-height:10.4px;font-size:8px;font-weight:normal;font-family:'Liberation Sans',sans-serif;letter-spacing:0.547px;color:#c8c8c8;">10</div>
<div class="a" style="left:550.50px;top:148.42px;line-height:10.4px;font-size:8px;font-weight:normal;font-family:'Liberation Sans',sans-serif;letter-spacing:0.547px;color:#c8c8c8;">20</div>
<div class="a" style="left:598.60px;top:148.42px;line-height:10.4px;font-size:8px;font-weight:normal;font-family:'Liberation Sans',sans-serif;letter-spacing:0.547px;color:#c8c8c8;">30</div>
<div class="a" style="left:646.70px;top:148.42px;line-height:10.4px;font-size:8px;font-weight:normal;font-family:'Liberation Sans',sans-serif;letter-spacing:0.547px;color:#c8c8c8;">40</div>
<div class="a" style="left:694.80px;top:148.42px;line-height:10.4px;font-size:8px;font-weight:normal;font-family:'Liberation Sans',sans-serif;letter-spacing:0.547px;color:#c8c8c8;">50</div>
<div class="a" style="left:742.90px;top:148.42px;line-height:10.4px;font-size:8px;font-weight:normal;font-family:'Liberation Sans',sans-serif;letter-spacing:0.547px;color:#c8c8c8;">60</div>
<div class="a" style="left:791.00px;top:148.42px;line-height:10.4px;font-size:8px;font-weight:normal;font-family:'Liberation Sans',sans-serif;letter-spacing:0.547px;color:#c8c8c8;">70</div>
<div class="a" style="left:839.10px;top:148.42px;line-height:10.4px;font-size:8px;font-weight:normal;font-family:'Liberation Sans',sans-serif;letter-spacing:0.547px;color:#c8c8c8;">80</div>
<div class="a" style="left:887.20px;top:148.42px;line-height:10.4px;font-size:8px;font-weight:normal;font-family:'Liberation Sans',sans-serif;letter-spacing:0.547px;color:#c8c8c8;">90</div>
<div class="a" style="left:932.80px;top:148.42px;line-height:10.4px;font-size:8px;font-weight:normal;font-family:'Liberation Sans',sans-serif;letter-spacing:0.547px;color:#c8c8c8;">100</div>
<div class="a" style="left:980.90px;top:148.42px;line-height:10.4px;font-size:8px;font-weight:normal;font-family:'Liberation Sans',sans-serif;letter-spacing:0.745px;color:#c8c8c8;">110</div>
<div class="a" style="left:1029.00px;top:148.42px;line-height:10.4px;font-size:8px;font-weight:normal;font-family:'Liberation Sans',sans-serif;letter-spacing:0.547px;color:#c8c8c8;">120</div>
<div class="a" style="left:1077.10px;top:148.42px;line-height:10.4px;font-size:8px;font-weight:normal;font-family:'Liberation Sans',sans-serif;letter-spacing:0.547px;color:#c8c8c8;">130</div>
<div class="a" style="left:1125.20px;top:148.42px;line-height:10.4px;font-size:8px;font-weight:normal;font-family:'Liberation Sans',sans-serif;letter-spacing:0.547px;color:#c8c8c8;">140</div>
<div class="a" style="left:1173.30px;top:148.42px;line-height:10.4px;font-size:8px;font-weight:normal;font-family:'Liberation Sans',sans-serif;letter-spacing:0.547px;color:#c8c8c8;">150</div>
<div class="r" style="left:428px;top:159px;width:29px;height:382px;background:#3b3b3b;"></div>
<div class="r" style="left:457px;top:159px;width:743px;height:382px;background:#181818;"></div>
<div class="r" style="left:457px;top:159px;width:743px;height:10px;background:#0f4a60;"></div>
<div class="r" style="left:458px;top:159px;width:1px;height:10px;background:#fff;"></div>
<div class="a" style="left:427px;width:20px;text-align:right;top:158.90px;font-family:'Liberation Mono',monospace;font-size:7.2px;line-height:10px;color:#7a7a7a">1</div>
<div class="a" style="left:459px;top:159.20px;font-family:'Liberation Mono',monospace;font-size:8px;line-height:10px;color:#f2f2f2;-webkit-text-stroke:0.15px #f2f2f2">#</div>
<div class="a" style="left:427px;width:20px;text-align:right;top:169.23px;font-family:'Liberation Mono',monospace;font-size:7.2px;line-height:10px;color:#7a7a7a">2</div>
<div class="a" style="left:459px;top:169.53px;font-family:'Liberation Mono',monospace;font-size:8px;line-height:10px;color:#f2f2f2;-webkit-text-stroke:0.15px #f2f2f2"># ADDITIONAL_DEFAULT_PROPERTIES</div>
<div class="a" style="left:427px;width:20px;text-align:right;top:179.56px;font-family:'Liberation Mono',monospace;font-size:7.2px;line-height:10px;color:#7a7a7a">3</div>
<div class="a" style="left:459px;top:179.86px;font-family:'Liberation Mono',monospace;font-size:8px;line-height:10px;color:#f2f2f2;-webkit-text-stroke:0.15px #f2f2f2">#</div>
<div class="a" style="left:427px;width:20px;text-align:right;top:189.89px;font-family:'Liberation Mono',monospace;font-size:7.2px;line-height:10px;color:#7a7a7a">4</div>
<div class="a" style="left:459px;top:190.19px;font-family:'Liberation Mono',monospace;font-size:8px;line-height:10px;color:#f2f2f2;-webkit-text-stroke:0.15px #f2f2f2">ro.actionable_compatible_property.enabled=true</div>
<div class="a" style="left:427px;width:20px;text-align:right;top:200.22px;font-family:'Liberation Mono',monospace;font-size:7.2px;line-height:10px;color:#7a7a7a">5</div>
<div class="a" style="left:459px;top:200.52px;font-family:'Liberation Mono',monospace;font-size:8px;line-height:10px;color:#f2f2f2;-webkit-text-stroke:0.15px #f2f2f2">ro.postinstall.fstab.prefix=/system</div>
<div class="a" style="left:427px;width:20px;text-align:right;top:210.55px;font-family:'Liberation Mono',monospace;font-size:7.2px;line-height:10px;color:#7a7a7a">6</div>
<div class="a" style="left:459px;top:210.85px;font-family:'Liberation Mono',monospace;font-size:8px;line-height:10px;color:#f2f2f2;-webkit-text-stroke:0.15px #f2f2f2">ro.secure=1</div>
<div class="a" style="left:427px;width:20px;text-align:right;top:220.88px;font-family:'Liberation Mono',monospace;font-size:7.2px;line-height:10px;color:#7a7a7a">7</div>
<div class="a" style="left:459px;top:221.18px;font-family:'Liberation Mono',monospace;font-size:8px;line-height:10px;color:#f2f2f2;-webkit-text-stroke:0.15px #f2f2f2">security.perf_harden=1</div>
<div class="a" style="left:427px;width:20px;text-align:right;top:231.21px;font-family:'Liberation Mono',monospace;font-size:7.2px;line-height:10px;color:#7a7a7a">8</div>
<div class="a" style="left:459px;top:231.51px;font-family:'Liberation Mono',monospace;font-size:8px;line-height:10px;color:#f2f2f2;-webkit-text-stroke:0.15px #f2f2f2">ro.adb.secure=1</div>
<div class="a" style="left:427px;width:20px;text-align:right;top:241.54px;font-family:'Liberation Mono',monospace;font-size:7.2px;line-height:10px;color:#7a7a7a">9</div>
<div class="a" style="left:459px;top:241.84px;font-family:'Liberation Mono',monospace;font-size:8px;line-height:10px;color:#f2f2f2;-webkit-text-stroke:0.15px #f2f2f2">ro.allow.mock.location=0</div>
<div class="a" style="left:427px;width:20px;text-align:right;top:251.87px;font-family:'Liberation Mono',monospace;font-size:7.2px;line-height:10px;color:#7a7a7a">10</div>
<div class="a" style="left:459px;top:252.17px;font-family:'Liberation Mono',monospace;font-size:8px;line-height:10px;color:#f2f2f2;-webkit-text-stroke:0.15px #f2f2f2">ro.debuggable=0</div>
<div class="a" style="left:427px;width:20px;text-align:right;top:262.20px;font-family:'Liberation Mono',monospace;font-size:7.2px;line-height:10px;color:#7a7a7a">11</div>
<div class="a" style="left:459px;top:262.50px;font-family:'Liberation Mono',monospace;font-size:8px;line-height:10px;color:#f2f2f2;-webkit-text-stroke:0.15px #f2f2f2">debug.atrace.tags.enableflags=0</div>
<div class="a" style="left:427px;width:20px;text-align:right;top:272.53px;font-family:'Liberation Mono',monospace;font-size:7.2px;line-height:10px;color:#7a7a7a">12</div>
<div class="a" style="left:459px;top:272.83px;font-family:'Liberation Mono',monospace;font-size:8px;line-height:10px;color:#f2f2f2;-webkit-text-stroke:0.15px #f2f2f2">dalvik.vm.image-dex2oat-Xms=64m</div>
<div class="a" style="left:427px;width:20px;text-align:right;top:282.86px;font-family:'Liberation Mono',monospace;font-size:7.2px;line-height:10px;color:#7a7a7a">13</div>
<div class="a" style="left:459px;top:283.16px;font-family:'Liberation Mono',monospace;font-size:8px;line-height:10px;color:#f2f2f2;-webkit-text-stroke:0.15px #f2f2f2">dalvik.vm.image-dex2oat-Xmx=64m</div>
<div class="a" style="left:427px;width:20px;text-align:right;top:293.19px;font-family:'Liberation Mono',monospace;font-size:7.2px;line-height:10px;color:#7a7a7a">14</div>
<div class="a" style="left:459px;top:293.49px;font-family:'Liberation Mono',monospace;font-size:8px;line-height:10px;color:#f2f2f2;-webkit-text-stroke:0.15px #f2f2f2">dalvik.vm.dex2oat-Xms=64m</div>
<div class="a" style="left:427px;width:20px;text-align:right;top:303.52px;font-family:'Liberation Mono',monospace;font-size:7.2px;line-height:10px;color:#7a7a7a">15</div>
<div class="a" style="left:459px;top:303.82px;font-family:'Liberation Mono',monospace;font-size:8px;line-height:10px;color:#f2f2f2;-webkit-text-stroke:0.15px #f2f2f2">dalvik.vm.dex2oat-Xmx=512m</div>
<div class="a" style="left:427px;width:20px;text-align:right;top:313.85px;font-family:'Liberation Mono',monospace;font-size:7.2px;line-height:10px;color:#7a7a7a">16</div>
<div class="a" style="left:459px;top:314.15px;font-family:'Liberation Mono',monospace;font-size:8px;line-height:10px;color:#f2f2f2;-webkit-text-stroke:0.15px #f2f2f2">dalvik.vm.usejit=true</div>
<div class="a" style="left:427px;width:20px;text-align:right;top:324.18px;font-family:'Liberation Mono',monospace;font-size:7.2px;line-height:10px;color:#7a7a7a">17</div>
<div class="a" style="left:459px;top:324.48px;font-family:'Liberation Mono',monospace;font-size:8px;line-height:10px;color:#f2f2f2;-webkit-text-stroke:0.15px #f2f2f2">dalvik.vm.usejitprofiles=true</div>
<div class="a" style="left:427px;width:20px;text-align:right;top:334.51px;font-family:'Liberation Mono',monospace;font-size:7.2px;line-height:10px;color:#7a7a7a">18</div>
<div class="a" style="left:459px;top:334.81px;font-family:'Liberation Mono',monospace;font-size:8px;line-height:10px;color:#f2f2f2;-webkit-text-stroke:0.15px #f2f2f2">dalvik.vm.dexopt.secondary=true</div>
<div class="a" style="left:427px;width:20px;text-align:right;top:344.84px;font-family:'Liberation Mono',monospace;font-size:7.2px;line-height:10px;color:#7a7a7a">19</div>
<div class="a" style="left:459px;top:345.14px;font-family:'Liberation Mono',monospace;font-size:8px;line-height:10px;color:#f2f2f2;-webkit-text-stroke:0.15px #f2f2f2">dalvik.vm.appimageformat=lz4</div>
<div class="a" style="left:427px;width:20px;text-align:right;top:355.17px;font-family:'Liberation Mono',monospace;font-size:7.2px;line-height:10px;color:#7a7a7a">20</div>
<div class="a" style="left:459px;top:355.47px;font-family:'Liberation Mono',monospace;font-size:8px;line-height:10px;color:#f2f2f2;-webkit-text-stroke:0.15px #f2f2f2">ro.magic.api.version=0.1</div>
<div class="a" style="left:427px;width:20px;text-align:right;top:365.50px;font-family:'Liberation Mono',monospace;font-size:7.2px;line-height:10px;color:#7a7a7a">21</div>
<div class="a" style="left:459px;top:365.80px;font-family:'Liberation Mono',monospace;font-size:8px;line-height:10px;color:#f2f2f2;-webkit-text-stroke:0.15px #f2f2f2">ro.dalvik.vm.native.bridge=0</div>
<div class="a" style="left:427px;width:20px;text-align:right;top:375.83px;font-family:'Liberation Mono',monospace;font-size:7.2px;line-height:10px;color:#7a7a7a">22</div>
<div class="a" style="left:459px;top:376.13px;font-family:'Liberation Mono',monospace;font-size:8px;line-height:10px;color:#f2f2f2;-webkit-text-stroke:0.15px #f2f2f2">pm.dexopt.first-boot=quicken</div>
<div class="a" style="left:427px;width:20px;text-align:right;top:386.16px;font-family:'Liberation Mono',monospace;font-size:7.2px;line-height:10px;color:#7a7a7a">23</div>
<div class="a" style="left:459px;top:386.46px;font-family:'Liberation Mono',monospace;font-size:8px;line-height:10px;color:#f2f2f2;-webkit-text-stroke:0.15px #f2f2f2">pm.dexopt.boot=verify</div>
<div class="a" style="left:427px;width:20px;text-align:right;top:396.49px;font-family:'Liberation Mono',monospace;font-size:7.2px;line-height:10px;color:#7a7a7a">24</div>
<div class="a" style="left:459px;top:396.79px;font-family:'Liberation Mono',monospace;font-size:8px;line-height:10px;color:#f2f2f2;-webkit-text-stroke:0.15px #f2f2f2">pm.dexopt.install=speed-profile</div>
<div class="a" style="left:427px;width:20px;text-align:right;top:406.82px;font-family:'Liberation Mono',monospace;font-size:7.2px;line-height:10px;color:#7a7a7a">25</div>
<div class="a" style="left:459px;top:407.12px;font-family:'Liberation Mono',monospace;font-size:8px;line-height:10px;color:#f2f2f2;-webkit-text-stroke:0.15px #f2f2f2">pm.dexopt.bg-dexopt=speed-profile</div>
<div class="a" style="left:427px;width:20px;text-align:right;top:417.15px;font-family:'Liberation Mono',monospace;font-size:7.2px;line-height:10px;color:#7a7a7a">26</div>
<div class="a" style="left:459px;top:417.45px;font-family:'Liberation Mono',monospace;font-size:8px;line-height:10px;color:#f2f2f2;-webkit-text-stroke:0.15px #f2f2f2">pm.dexopt.ab-ota=speed-profile</div>
<div class="a" style="left:427px;width:20px;text-align:right;top:427.48px;font-family:'Liberation Mono',monospace;font-size:7.2px;line-height:10px;color:#7a7a7a">27</div>
<div class="a" style="left:459px;top:427.78px;font-family:'Liberation Mono',monospace;font-size:8px;line-height:10px;color:#f2f2f2;-webkit-text-stroke:0.15px #f2f2f2">pm.dexopt.inactive=verify</div>
<div class="a" style="left:427px;width:20px;text-align:right;top:437.81px;font-family:'Liberation Mono',monospace;font-size:7.2px;line-height:10px;color:#7a7a7a">28</div>
<div class="a" style="left:459px;top:438.11px;font-family:'Liberation Mono',monospace;font-size:8px;line-height:10px;color:#f2f2f2;-webkit-text-stroke:0.15px #f2f2f2">pm.dexopt.shared=speed</div>
<div class="a" style="left:427px;width:20px;text-align:right;top:448.14px;font-family:'Liberation Mono',monospace;font-size:7.2px;line-height:10px;color:#7a7a7a">29</div>
<div class="a" style="left:459px;top:448.44px;font-family:'Liberation Mono',monospace;font-size:8px;line-height:10px;color:#f2f2f2;-webkit-text-stroke:0.15px #f2f2f2">dalvik.vm.dex2oat-resolve-startup-strings=true</div>
<div class="a" style="left:427px;width:20px;text-align:right;top:458.47px;font-family:'Liberation Mono',monospace;font-size:7.2px;line-height:10px;color:#7a7a7a">30</div>
<div class="a" style="left:459px;top:458.77px;font-family:'Liberation Mono',monospace;font-size:8px;line-height:10px;color:#f2f2f2;-webkit-text-stroke:0.15px #f2f2f2">dalvik.vm.dex2oat-max-image-block-size=524288</div>
<div class="a" style="left:427px;width:20px;text-align:right;top:468.80px;font-family:'Liberation Mono',monospace;font-size:7.2px;line-height:10px;color:#7a7a7a">31</div>
<div class="a" style="left:459px;top:469.10px;font-family:'Liberation Mono',monospace;font-size:8px;line-height:10px;color:#f2f2f2;-webkit-text-stroke:0.15px #f2f2f2">dalvik.vm.minidebuginfo=true</div>
<div class="a" style="left:427px;width:20px;text-align:right;top:479.13px;font-family:'Liberation Mono',monospace;font-size:7.2px;line-height:10px;color:#7a7a7a">32</div>
<div class="a" style="left:459px;top:479.43px;font-family:'Liberation Mono',monospace;font-size:8px;line-height:10px;color:#f2f2f2;-webkit-text-stroke:0.15px #f2f2f2">dalvik.vm.dex2oat-minidebuginfo=true</div>
<div class="a" style="left:427px;width:20px;text-align:right;top:489.46px;font-family:'Liberation Mono',monospace;font-size:7.2px;line-height:10px;color:#7a7a7a">33</div>
<div class="a" style="left:459px;top:489.76px;font-family:'Liberation Mono',monospace;font-size:8px;line-height:10px;color:#f2f2f2;-webkit-text-stroke:0.15px #f2f2f2">ro.iorapd.enable=false</div>
<div class="a" style="left:427px;width:20px;text-align:right;top:499.79px;font-family:'Liberation Mono',monospace;font-size:7.2px;line-height:10px;color:#7a7a7a">34</div>
<div class="a" style="left:459px;top:500.09px;font-family:'Liberation Mono',monospace;font-size:8px;line-height:10px;color:#f2f2f2;-webkit-text-stroke:0.15px #f2f2f2">persist.sys.usb.config=none</div>
<div class="a" style="left:427px;width:20px;text-align:right;top:510.12px;font-family:'Liberation Mono',monospace;font-size:7.2px;line-height:10px;color:#7a7a7a">35</div>
<div class="r" style="left:455px;top:211px;width:136px;height:53px;background:transparent;border:1px solid #b43a4a"></div>
<div class="r" style="left:428px;top:541px;width:772px;height:11px;background:#3b3b3b;"></div>
<div class="r" style="left:444px;top:543px;width:756px;height:8px;background:#8b8780;border-radius:4px 0 0 4px"></div>
<svg style="left:433.5px;top:542.5px" width="9" height="9"><circle cx="4.5" cy="4.5" r="4" fill="#8b8780"/><path d="M6 1.8 V7.2 L2.2 4.5 Z" fill="#111"/></svg>
<div class="r" style="left:428px;top:552px;width:772px;height:5px;background:#363636;"></div>
<div class="r" style="left:428px;top:557px;width:772px;height:16px;background:#4d4d4d;"></div>
<div class="r" style="left:428px;top:556px;width:772px;height:1px;background:#2e2e2e;"></div>
<div class="a" style="left:430.00px;top:560.92px;line-height:10.4px;font-size:8px;font-weight:normal;font-family:'Liberation Sans',sans-serif;letter-spacing:-0.309px;color:#e8e8e8;">按 F1 获取帮助</div>
<div class="r" style="left:805px;top:557px;width:1px;height:16px;background:#383838;"></div>
<div class="r" style="left:837px;top:557px;width:1px;height:16px;background:#383838;"></div>
<div class="r" style="left:910px;top:557px;width:1px;height:16px;background:#383838;"></div>
<div class="r" style="left:941px;top:557px;width:1px;height:16px;background:#383838;"></div>
<div class="r" style="left:1173px;top:557px;width:1px;height:16px;background:#383838;"></div>
<div class="r" style="left:1000px;top:558px;width:9px;height:14px;background:#2e2e2e;"></div>
<div class="r" style="left:1073px;top:558px;width:9px;height:14px;background:#2e2e2e;"></div>
<svg style="left:1002.5px;top:564px" width="5" height="3"><path d="M0 0 H5 L2.5 3 Z" fill="#ddd"/></svg>
<svg style="left:1075.5px;top:564px" width="5" height="3"><path d="M0 0 H5 L2.5 3 Z" fill="#ddd"/></svg>
<div class="a" style="left:840.50px;top:560.92px;line-height:10.4px;font-size:8px;font-weight:normal;font-family:'Liberation Sans',sans-serif;letter-spacing:-0.331px;color:#e0e0e0;">行 1, 列 1, C0</div>
<div class="a" style="left:913.50px;top:560.92px;line-height:10.4px;font-size:8px;font-weight:normal;font-family:'Liberation Sans',sans-serif;letter-spacing:0.094px;color:#e0e0e0;">UNIX</div>
<div class="a" style="left:945.00px;top:560.92px;line-height:10.4px;font-size:8px;font-weight:normal;font-family:'Liberation Sans',sans-serif;letter-spacing:-0.228px;color:#e0e0e0;">65001 (UTF-8)</div>
<div class="a" style="left:1013.00px;top:560.92px;line-height:10.4px;font-size:8px;font-weight:normal;font-family:'Liberation Sans',sans-serif;letter-spacing:-0.667px;color:#e0e0e0;">不高亮</div>
<div class="a" style="left:1087.00px;top:560.92px;line-height:10.4px;font-size:8px;font-weight:normal;font-family:'Liberation Sans',sans-serif;letter-spacing:-0.078px;color:#e0e0e0;">修改:</div>
<div class="a" style="left:1112.00px;top:560.92px;line-height:10.4px;font-size:8px;font-weight:normal;font-family:'Liberation Sans',sans-serif;letter-spacing:-0.316px;color:#e0e0e0;">2018/8/8 0:01:00</div>
<div class="a" style="left:1177.00px;top:560.92px;line-height:10.4px;font-size:8px;font-weight:normal;font-family:'Liberation Sans',sans-serif;letter-spacing:0.000px;color:#e0e0e0;">文件大</div>
<svg style="left:960px;top:617.5px" width="230" height="32"><g transform="translate(-0.6,1.4)"><g fill="none" stroke="#0a0a0a" stroke-width="3.2" stroke-linecap="butt"><g transform="translate(0,0)"><path d="M6 4 L9.5 8"/><path d="M4.5 11 L8.5 14.5"/><path d="M1 18 H24"/><path d="M14.5 0.5 V15 Q14 23 2 28"/><path d="M16 21 L23.5 27.5"/></g><g transform="translate(31,0)"><path d="M11 0.5 L3 9"/><path d="M7.5 5 H20 Q15 12 4 15.5"/><path d="M9 7 Q16 13 26 15"/><path d="M2.5 18.5 H25.5"/><path d="M14 14 V28.5"/><path d="M12.5 20 L4 27"/><path d="M15.5 20 L24 27"/></g><g transform="translate(98,0)"><path d="M2 10 H26"/><path d="M14.5 0.5 V10 Q13 21 2.5 28"/><path d="M15 12 Q19 22 27 28"/></g><g transform="translate(163,0)"><path d="M10.5 1 Q7 3 2.5 4"/><path d="M1.5 9.5 H12.5"/><path d="M7 2.5 V28.5"/><path d="M7 11 Q5 18 1.5 21.5"/><path d="M8 12.5 L12 17"/><path d="M15.5 4.5 L18.5 8"/><path d="M15.5 11.5 L18.5 15"/><path d="M13.5 20 L28 17.5"/><path d="M22.5 0.5 V28.5"/></g><g transform="translate(195,0)"><path d="M1.5 9 H11.5"/><path d="M6.5 1 V25 Q6.5 27.5 3.5 27"/><path d="M1.5 21 L12 16.5"/><path d="M13 6.5 H27"/><path d="M20 0.5 V13"/><path d="M14 13.5 H24 Q21 22 13.5 28"/><path d="M16.5 17 Q21 25 28 28"/></g></g><text x="82" y="25" font-family="Liberation Sans" font-size="31" text-anchor="middle" fill="#0a0a0a" stroke="#0a0a0a" stroke-width="1.1">@</text><text x="144" y="27" font-family="Liberation Sans" font-size="34" text-anchor="middle" fill="#0a0a0a" stroke="#0a0a0a" stroke-width="0.3" transform="translate(144,0) scale(1.05,1) translate(-144,0)">M</text></g><g fill="none" stroke="#ffffff" stroke-width="0.9" stroke-linecap="butt"><g transform="translate(0,0)"><path d="M6 4 L9.5 8"/><path d="M4.5 11 L8.5 14.5"/><path d="M1 18 H24"/><path d="M14.5 0.5 V15 Q14 23 2 28"/><path d="M16 21 L23.5 27.5"/></g><g transform="translate(31,0)"><path d="M11 0.5 L3 9"/><path d="M7.5 5 H20 Q15 12 4 15.5"/><path d="M9 7 Q16 13 26 15"/><path d="M2.5 18.5 H25.5"/><path d="M14 14 V28.5"/><path d="M12.5 20 L4 27"/><path d="M15.5 20 L24 27"/></g><g transform="translate(98,0)"><path d="M2 10 H26"/><path d="M14.5 0.5 V10 Q13 21 2.5 28"/><path d="M15 12 Q19 22 27 28"/></g><g transform="translate(163,0)"><path d="M10.5 1 Q7 3 2.5 4"/><path d="M1.5 9.5 H12.5"/><path d="M7 2.5 V28.5"/><path d="M7 11 Q5 18 1.5 21.5"/><path d="M8 12.5 L12 17"/><path d="M15.5 4.5 L18.5 8"/><path d="M15.5 11.5 L18.5 15"/><path d="M13.5 20 L28 17.5"/><path d="M22.5 0.5 V28.5"/></g><g transform="translate(195,0)"><path d="M1.5 9 H11.5"/><path d="M6.5 1 V25 Q6.5 27.5 3.5 27"/><path d="M1.5 21 L12 16.5"/><path d="M13 6.5 H27"/><path d="M20 0.5 V13"/><path d="M14 13.5 H24 Q21 22 13.5 28"/><path d="M16.5 17 Q21 25 28 28"/></g></g></svg>
</body></html>
